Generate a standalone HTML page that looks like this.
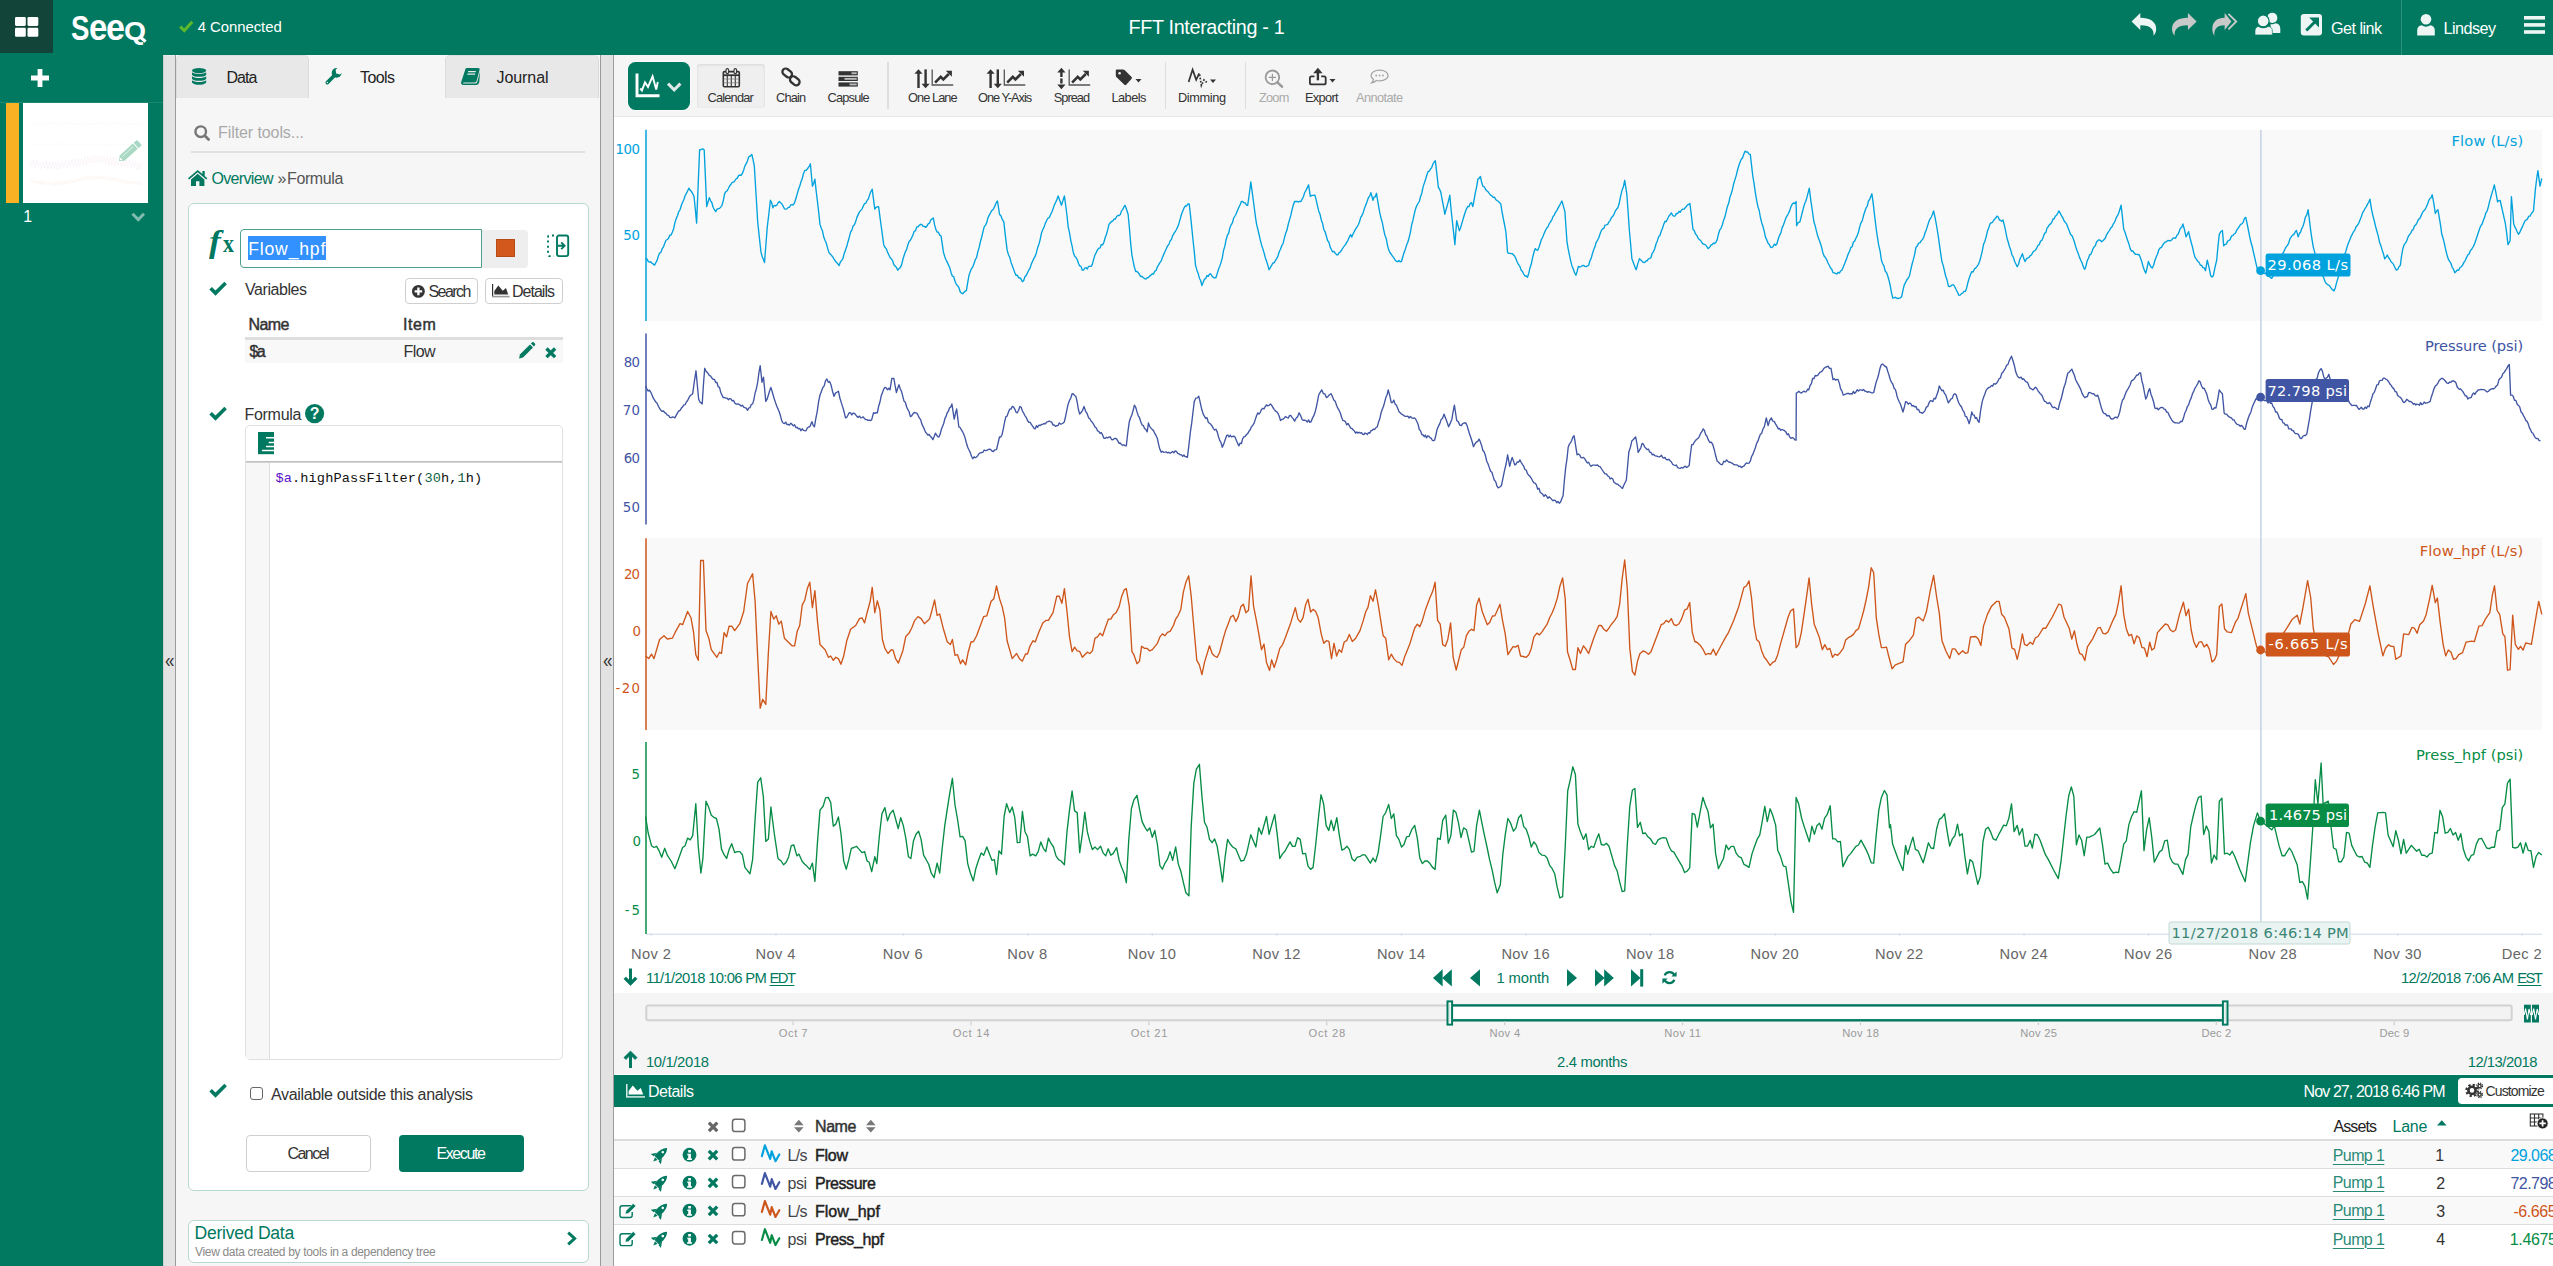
<!DOCTYPE html>
<html lang="en"><head><meta charset="utf-8"><title>FFT Interacting - 1</title>
<style>
html,body{margin:0;padding:0}
body{width:2553px;height:1266px;overflow:hidden;background:#fff;font-family:"Liberation Sans",sans-serif;position:relative}
.a{position:absolute;box-sizing:border-box}
.t{white-space:pre;font-kerning:auto}
svg{overflow:visible}
</style></head><body>
<section class="a" style="left:0;top:0">
<div class="a header" style="left:0px;top:0px;width:2553px;height:54.6px;background:#007960;"></div>
<div class="a sidebar" style="left:0px;top:54.6px;width:163.3px;height:1211.4px;background:#007960;"></div>
<div class="a " style="left:0px;top:0px;width:53px;height:53.3px;background:#13443a;"></div>
<svg class="a" style="left:14.5px;top:16.5px;" width="23.3" height="19.7" viewBox="0 0 23.3 19.7"><g fill="#fff"><rect x="0" y="0" width="10.8" height="8.9" rx="1.3"/><rect x="12.5" y="0" width="10.8" height="8.9" rx="1.3"/><rect x="0" y="10.8" width="10.8" height="8.9" rx="1.3"/><rect x="12.5" y="10.8" width="10.8" height="8.9" rx="1.3"/></g></svg>
<div class="a logo" style="left:0;top:0"><span class="a t" style="left:70.82px;top:6.50px;font:normal bold 35.3px/42px 'Liberation Sans',sans-serif;color:#fff;transform:scaleX(0.7818);transform-origin:0 0;">S</span><span class="a t" style="left:88.69px;top:6.00px;font:normal bold 36.2px/43px 'Liberation Sans',sans-serif;color:#fff;transform:scaleX(0.9111);transform-origin:0 0;">e</span><span class="a t" style="left:106.06px;top:6.00px;font:normal bold 36.2px/43px 'Liberation Sans',sans-serif;color:#fff;transform:scaleX(0.9444);transform-origin:0 0;">e</span><span class="a t" style="left:123.74px;top:15.00px;font:normal bold 26.6px/32px 'Liberation Sans',sans-serif;color:#fff;transform:scaleX(1.0632);transform-origin:0 0;">Q</span></div>
<svg class="a" style="left:136px;top:33px;" width="12" height="11" viewBox="0 0 12 11"><path d="M3.4 3.2 L9.6 8.6" stroke="#fff" stroke-width="3.2"/></svg>
<svg class="a" style="left:179px;top:20px;" width="14.5" height="12.5" viewBox="0 0 14.5 12.5"><path d="M1.2 6.6 L5.3 10.6 L13.3 1.8" stroke="#5cb82a" stroke-width="2.9" fill="none"/></svg>
<span class="a t" style="left:197.70px;top:17.50px;font:normal normal 14.9px/18px 'Liberation Sans',sans-serif;color:#fff;letter-spacing:-0.046px;">4 Connected</span>
<span class="a t" style="left:1128.50px;top:14.90px;font:normal normal 19.8px/24px 'Liberation Sans',sans-serif;color:#fff;letter-spacing:-0.344px;">FFT Interacting - 1</span>
<span class="a t" style="left:2331.00px;top:18.60px;font:normal normal 16.2px/19px 'Liberation Sans',sans-serif;color:#fff;letter-spacing:-0.541px;">Get link</span>
<div class="a " style="left:2401px;top:0px;width:1.2px;height:54.6px;background:#2f917b;"></div>
<span class="a t" style="left:2443.50px;top:18.60px;font:normal normal 16.2px/19px 'Liberation Sans',sans-serif;color:#fff;letter-spacing:-0.533px;">Lindsey</span>
<svg class="a" style="left:2524px;top:16px;" width="21" height="18" viewBox="0 0 21 18"><g fill="#eef6f4"><rect x="0" y="0" width="21" height="3.6"/><rect x="0" y="7.1" width="21" height="3.6"/><rect x="0" y="14.2" width="21" height="3.6"/></g></svg>
<div class="a " style="left:0px;top:101.5px;width:163.3px;height:1.1px;background:#1a8770;"></div>
<svg class="a" style="left:31px;top:68.5px;" width="18" height="18" viewBox="0 0 18 18"><path d="M6.6 0h4.8v6.6h6.6v4.8h-6.6v6.6h-4.8v-6.6h-6.6v-4.8h6.6z" fill="#fff"/></svg>
<div class="a " style="left:6px;top:103.3px;width:13.2px;height:100.2px;background:#fbb124;"></div>
<div class="a thumb" style="left:22.8px;top:103.3px;width:125.4px;height:100.2px;background:#fff;"></div>
<svg class="a" style="left:22.8px;top:103.3px;" width="125.4" height="100.2" viewBox="22.8 103.3 125.4 100.2"><polyline points="30.0,123.1 31.9,125.5 33.7,122.6 35.6,125.0 37.5,122.8 39.3,125.2 41.2,122.7 43.1,125.4 44.9,123.1 46.8,124.8 48.7,122.5 50.5,125.1 52.4,122.6 54.3,124.8 56.1,122.8 58.0,125.4 59.9,123.0 61.7,125.6 63.6,122.5 65.5,124.8 67.3,123.2 69.2,125.2 71.1,122.4 72.9,125.1 74.8,123.0 76.7,125.1 78.5,123.2 80.4,125.0 82.3,122.8 84.1,125.2 86.0,123.0 87.9,125.0 89.7,123.0 91.6,125.2 93.5,123.0 95.3,124.8 97.2,122.5 99.1,125.2 100.9,122.7 102.8,124.9 104.7,122.4 106.5,125.5 108.4,123.1 110.3,125.1 112.1,122.6 114.0,125.4 115.9,122.5 117.7,125.1 119.6,122.5 121.5,125.3 123.3,123.0 125.2,125.3 127.1,122.5 128.9,125.5 130.8,122.8 132.7,125.3 134.5,123.2 136.4,125.0 138.3,122.6 140.1,125.1 142.0,123.1" fill="none" stroke="#4055A3" stroke-width="0.8" opacity="0.04"/><polyline points="30.0,143.4 31.9,146.6 33.7,144.2 35.6,145.9 37.5,143.5 39.3,146.4 41.2,143.7 43.1,146.0 44.9,143.7 46.8,146.3 48.7,143.7 50.5,145.9 52.4,143.9 54.3,146.1 56.1,143.6 58.0,146.6 59.9,143.4 61.7,146.2 63.6,143.8 65.5,146.0 67.3,144.2 69.2,145.8 71.1,143.8 72.9,146.1 74.8,143.9 76.7,146.5 78.5,143.8 80.4,146.2 82.3,144.0 84.1,145.8 86.0,143.9 87.9,145.9 89.7,143.8 91.6,146.6 93.5,143.7 95.3,145.9 97.2,143.5 99.1,146.4 100.9,143.6 102.8,146.5 104.7,143.6 106.5,146.4 108.4,143.9 110.3,146.6 112.1,143.4 114.0,145.9 115.9,143.6 117.7,146.4 119.6,143.8 121.5,146.2 123.3,143.8 125.2,146.5 127.1,143.8 128.9,146.5 130.8,143.9 132.7,146.5 134.5,143.5 136.4,146.2 138.3,143.7 140.1,146.5 142.0,143.6" fill="none" stroke="#068C45" stroke-width="0.8" opacity="0.04"/><polyline points="30.0,160.2 31.6,166.8 33.2,160.6 34.8,167.6 36.4,160.6 38.0,167.0 39.6,162.6 41.2,169.2 42.8,162.5 44.4,168.3 46.0,161.2 47.6,169.1 49.2,161.8 50.8,169.3 52.4,162.3 54.0,168.6 55.6,162.3 57.2,170.1 58.8,162.3 60.4,169.5 62.0,161.6 63.6,167.6 65.2,161.0 66.8,168.2 68.4,161.4 70.0,166.4 71.6,159.6 73.2,166.7 74.8,159.2 76.4,167.0 78.0,158.6 79.6,166.4 81.2,158.7 82.8,165.5 84.4,158.0 86.0,165.3 87.6,156.5 89.2,163.0 90.8,157.8 92.4,163.0 94.0,155.7 95.6,163.3 97.2,156.3 98.8,162.9 100.4,156.7 102.0,163.2 103.6,157.2 105.2,163.9 106.8,157.0 108.4,165.1 110.0,157.2 111.6,165.6 113.2,157.4 114.8,166.3 116.4,158.4 118.0,165.1 119.6,158.6 121.2,167.6 122.8,159.2 124.4,167.3 126.0,160.3 127.6,167.1 129.2,160.6 130.8,168.5 132.4,162.3 134.0,167.8 135.6,161.4 137.2,170.2 138.8,163.4 140.4,170.0 142.0,162.8" fill="none" stroke="#9D248F" stroke-width="0.8" opacity="0.06"/><polyline points="30.0,179.6 31.6,182.5 33.2,180.1 34.8,183.3 36.4,181.1 38.0,184.1 39.6,180.7 41.2,185.1 42.8,181.4 44.4,184.9 46.0,182.0 47.6,185.2 49.2,182.6 50.8,185.2 52.4,182.7 54.0,186.1 55.6,181.9 57.2,185.8 58.8,181.7 60.4,184.9 62.0,181.9 63.6,185.0 65.2,181.0 66.8,184.7 68.4,180.3 70.0,183.3 71.6,180.0 73.2,183.3 74.8,179.4 76.4,182.1 78.0,178.8 79.6,181.3 81.2,177.7 82.8,181.5 84.4,177.5 86.0,180.4 87.6,176.6 89.2,180.3 90.8,176.3 92.4,180.2 94.0,176.4 95.6,179.6 97.2,176.2 98.8,179.6 100.4,176.8 102.0,179.6 103.6,176.2 105.2,179.5 106.8,177.4 108.4,180.6 110.0,177.6 111.6,181.0 113.2,177.9 114.8,181.3 116.4,178.0 118.0,181.8 119.6,179.3 121.2,182.5 122.8,179.7 124.4,183.2 126.0,180.6 127.6,184.3 129.2,181.3 130.8,184.7 132.4,181.1 134.0,184.6 135.6,182.4 137.2,185.1 138.8,181.9 140.4,185.7 142.0,182.6" fill="none" stroke="#CE561B" stroke-width="0.8" opacity="0.07"/><g transform="translate(118.8 161.2) rotate(-42)" fill="#a9d9c5"><path d="M0 0 L4.2 -3.6 L22 -3.6 L22 3.6 L4.2 3.6 Z"/><path d="M23 -3.6 H26.4 Q27.6 -3.6 27.6 -2.4 V2.4 Q27.6 3.6 26.4 3.6 H23 Z"/><path d="M5.5 -1 H20" stroke="#e3f3ec" stroke-width="0.9"/><circle cx="2.6" cy="0" r="1.1" fill="#fff"/></g></svg>
<span class="a t" style="left:23.20px;top:206.90px;font:normal normal 16px/19px 'Liberation Sans',sans-serif;color:#fff;">1</span>
<svg class="a" style="left:131px;top:212px;" width="14.5" height="10" viewBox="0 0 14.5 10"><path d="M1.5 1.8 L7.25 7.6 L13 1.8" stroke="#7fbcaf" stroke-width="3" fill="none"/></svg>
<div class="a " style="left:163.3px;top:54.6px;width:12px;height:1211.4px;background:#e3e3e3;border-left:1px solid #d2cfcf;border-top:1px solid #ebebeb;"></div>
<div class="a " style="left:175.3px;top:54.6px;width:1px;height:1211.4px;background:#9a9a9a;"></div>
<div class="a " style="left:599.9px;top:54.6px;width:1px;height:1211.4px;background:#9a9a9a;"></div>
<div class="a " style="left:600.9px;top:54.6px;width:12px;height:1211.4px;background:#e2e2e2;"></div>
<div class="a " style="left:612.9px;top:54.6px;width:1px;height:1211.4px;background:#9c9c9c;"></div>
<span class="a t" style="left:165.10px;top:647.30px;font:normal normal 21px/25px 'Liberation Sans',sans-serif;color:#333;transform:scaleX(0.8091);transform-origin:0 0;">«</span>
<span class="a t" style="left:602.60px;top:647.30px;font:normal normal 21px/25px 'Liberation Sans',sans-serif;color:#333;transform:scaleX(0.8091);transform-origin:0 0;">«</span>
</section>
<svg class="a" style="left:0;top:0" width="2553" height="55" viewBox="0 0 2553 55">
<g fill="#edf6f4"><path transform="translate(2131.6 13.1)" d="M0 8.3 L8.7 0 L8.7 4.6 C18 4.6 24.6 8.4 24.6 15.8 C24.6 18.6 23.2 21.2 21.9 22.6 C22.6 17 19.8 12.1 8.7 12.1 L8.7 16.8 Z"/></g>
<g fill="#c9c9c9"><path transform="translate(2196.6 13.1) scale(-1 1)" d="M0 8.3 L8.7 0 L8.7 4.6 C18 4.6 24.6 8.4 24.6 15.8 C24.6 18.6 23.2 21.2 21.9 22.6 C22.6 17 19.8 12.1 8.7 12.1 L8.7 16.8 Z"/></g>
<g fill="#c9c9c9"><path transform="translate(2231.4 13.1) scale(-0.776 1)" d="M0 8.3 L8.7 0 L8.7 4.6 C18 4.6 24.6 8.4 24.6 15.8 C24.6 18.6 23.2 21.2 21.9 22.6 C22.6 17 19.8 12.1 8.7 12.1 L8.7 16.8 Z"/><path d="M2228.4 13.9 L2236.2 21.5 L2228.4 29.3" stroke="#c9c9c9" stroke-width="1.9" fill="none"/></g>
<g fill="#edf6f4"><circle cx="2272.3" cy="17.9" r="5.1"/><path d="M2271 33 L2280.3 33 L2280.3 28.5 C2280.3 25.5 2278.5 23.6 2275.5 23.3 C2274 24.3 2272.5 24.6 2270.5 24.2 Z"/><circle cx="2263.2" cy="20.9" r="5.9" stroke="#007960" stroke-width="1.2"/><path d="M2255 34.9 L2272.4 34.9 L2272.4 31 C2272.4 28.2 2270.8 26.6 2268.3 26.4 C2265 28.4 2261.5 28.4 2258.6 26.4 C2256.5 26.6 2255 28.2 2255 31 Z" stroke="#007960" stroke-width="0.6"/></g>
<rect x="2300.8" y="14.1" width="21.2" height="21.4" rx="3.2" fill="#edf6f4"/><path d="M2306.3 30.4 L2316.2 20.4" stroke="#007960" stroke-width="2.9"/><path d="M2309.2 17.6 L2319 17.6 L2319 27.4 Z" fill="#007960"/>
<g fill="#edf6f4"><circle cx="2426" cy="19.3" r="5.3"/><path d="M2417.2 35.4 L2434.8 35.4 L2434.8 30.5 C2434.8 27.3 2433 25.6 2430.3 25.3 C2427.5 27.2 2424.5 27.2 2421.7 25.3 C2419 25.6 2417.2 27.3 2417.2 30.5 Z"/></g>
</svg>
<section class="a" style="left:0;top:0">
<div class="a panel" style="left:176.3px;top:54.6px;width:423.6px;height:1211.4px;background:#f6f6f6;"></div>
<div class="a " style="left:176.3px;top:55.3px;width:132.3px;height:42.9px;background:#e8e8e8;border:1px solid #dcdcdc;border-bottom:none;border-radius:5px 5px 0 0;"></div>
<div class="a " style="left:445px;top:55.3px;width:153.6px;height:42.9px;background:#e8e8e8;border:1px solid #dcdcdc;border-bottom:none;border-radius:5px 5px 0 0;"></div>
<span class="a t" style="left:226.50px;top:67.90px;font:normal normal 16px/19px 'Liberation Sans',sans-serif;color:#222;letter-spacing:-0.966px;">Data</span>
<span class="a t" style="left:360.00px;top:67.90px;font:normal normal 16px/19px 'Liberation Sans',sans-serif;color:#222;letter-spacing:-0.588px;">Tools</span>
<span class="a t" style="left:496.50px;top:67.90px;font:normal normal 16px/19px 'Liberation Sans',sans-serif;color:#222;letter-spacing:-0.070px;">Journal</span>
<span class="a t" style="left:218.00px;top:123.40px;font:normal normal 16px/19px 'Liberation Sans',sans-serif;color:#a9a9a9;letter-spacing:-0.085px;">Filter tools...</span>
<div class="a " style="left:191px;top:151.3px;width:394px;height:1.3px;background:#e2e2e2;"></div>
<span class="a t" style="left:211.50px;top:168.70px;font:normal normal 16px/19px 'Liberation Sans',sans-serif;color:#007960;letter-spacing:-0.661px;">Overview</span>
<span class="a t" style="left:277.60px;top:168.70px;font:normal normal 16px/19px 'Liberation Sans',sans-serif;color:#555;">»</span>
<span class="a t" style="left:287.00px;top:168.70px;font:normal normal 16px/19px 'Liberation Sans',sans-serif;color:#555;letter-spacing:-0.380px;">Formula</span>
<div class="a card" style="left:188.1px;top:203.4px;width:400.7px;height:987.4px;background:#fff;border:1.3px solid #b5d8d0;border-radius:6px;"></div>
<div class="a" style="left:0;top:0"><span class="a t" style="left:208.50px;top:222.30px;font:italic bold 32px/38px 'Liberation Serif',serif;color:#007960;transform:scaleX(1.1071);transform-origin:0 0;">f</span><span class="a t" style="left:223.20px;top:228.30px;font:normal bold 26px/31px 'Liberation Serif',serif;color:#007960;transform:scaleX(0.8462);transform-origin:0 0;">x</span></div>
<div class="a " style="left:240px;top:229.2px;width:241.5px;height:38.4px;background:#fff;border:1.4px solid #4e9f8c;border-radius:4px 0 0 4px;"></div>
<div class="a " style="left:481.5px;top:229.5px;width:46.5px;height:38px;background:#eeeeee;border-radius:0 4px 4px 0;"></div>
<div class="a " style="left:248px;top:235.6px;width:78.3px;height:24.4px;background:#3390ff;"></div>
<span class="a t" style="left:248.20px;top:239.10px;font:normal normal 17.6px/21px 'Liberation Sans',sans-serif;color:#fff;letter-spacing:0.828px;">Flow_hpf</span>
<div class="a " style="left:496px;top:238.6px;width:19px;height:18.7px;background:#d2581b;border:1px solid #b84c16;"></div>
<span class="a t" style="left:245.00px;top:280.10px;font:normal normal 16px/19px 'Liberation Sans',sans-serif;color:#333;letter-spacing:-0.439px;">Variables</span>
<div class="a " style="left:405px;top:277.5px;width:72.5px;height:26.5px;background:#fff;border:1.2px solid #cfcfcf;border-radius:4px;"></div>
<div class="a " style="left:485px;top:277.5px;width:78px;height:26.5px;background:#fff;border:1.2px solid #cfcfcf;border-radius:4px;"></div>
<span class="a t" style="left:428.50px;top:281.90px;font:normal normal 16px/19px 'Liberation Sans',sans-serif;color:#333;letter-spacing:-1.559px;">Search</span>
<span class="a t" style="left:512.00px;top:281.90px;font:normal normal 16px/19px 'Liberation Sans',sans-serif;color:#333;letter-spacing:-0.984px;">Details</span>
<span class="a t" style="left:248.50px;top:315.00px;font:normal normal 16px/19px 'Liberation Sans',sans-serif;color:#333;letter-spacing:-0.594px;-webkit-text-stroke:0.45px #333;">Name</span>
<span class="a t" style="left:403.00px;top:315.00px;font:normal normal 16px/19px 'Liberation Sans',sans-serif;color:#333;letter-spacing:0.570px;-webkit-text-stroke:0.45px #333;">Item</span>
<div class="a " style="left:245px;top:337.3px;width:317.5px;height:2.3px;background:#dddddd;"></div>
<div class="a " style="left:245px;top:339.6px;width:317.5px;height:23.4px;background:#f8f8f8;"></div>
<span class="a t" style="left:249.50px;top:341.50px;font:normal normal 16px/19px 'Liberation Sans',sans-serif;color:#333;letter-spacing:-1.600px;-webkit-text-stroke:0.45px #333;">$a</span>
<span class="a t" style="left:403.50px;top:341.50px;font:normal normal 16px/19px 'Liberation Sans',sans-serif;color:#333;letter-spacing:-0.576px;">Flow</span>
<span class="a t" style="left:244.50px;top:404.80px;font:normal normal 16px/19px 'Liberation Sans',sans-serif;color:#333;letter-spacing:-0.297px;">Formula</span>
<div class="a " style="left:245px;top:425.4px;width:317.6px;height:634.6px;background:#fff;border:1.2px solid #e0e0e0;border-radius:5px;"></div>
<div class="a " style="left:245.6px;top:461px;width:316.4px;height:2.2px;background:linear-gradient(#b5b5b5,#dedede);"></div>
<div class="a " style="left:246.2px;top:463.2px;width:24.2px;height:595.8px;background:#f7f7f7;border-right:1.2px solid #dddddd;"></div>
<span class="a t" style="left:275.50px;top:471.40px;font:normal normal 13.62px/16px 'Liberation Mono',monospace;color:#111;letter-spacing:0.104px;"><span style="color:#5a12c8">$a</span>.highPassFilter(<span style="color:#116644">30</span>h,<span style="color:#116644">1</span>h)</span>
<div class="a " style="left:250px;top:1086.5px;width:13px;height:13px;background:#fff;border:1.5px solid #666;border-radius:3px;"></div>
<span class="a t" style="left:271.00px;top:1085.10px;font:normal normal 16px/19px 'Liberation Sans',sans-serif;color:#333;letter-spacing:-0.342px;">Available outside this analysis</span>
<div class="a " style="left:246px;top:1134.5px;width:125px;height:37px;background:#fff;border:1.3px solid #cfcfcf;border-radius:4px;"></div>
<span class="a t" style="left:287.50px;top:1144.10px;font:normal normal 16px/19px 'Liberation Sans',sans-serif;color:#333;letter-spacing:-1.550px;">Cancel</span>
<div class="a " style="left:399px;top:1134.5px;width:125px;height:37px;background:#007960;border-radius:4px;"></div>
<span class="a t" style="left:436.50px;top:1144.10px;font:normal normal 16px/19px 'Liberation Sans',sans-serif;color:#fff;letter-spacing:-1.402px;">Execute</span>
<div class="a " style="left:188.1px;top:1219.5px;width:400.7px;height:43.8px;background:#fff;border:1.3px solid #b5d8d0;border-radius:6px;"></div>
<span class="a t" style="left:194.50px;top:1223.30px;font:normal normal 17.6px/21px 'Liberation Sans',sans-serif;color:#007960;letter-spacing:-0.263px;">Derived Data</span>
<span class="a t" style="left:195.00px;top:1245.20px;font:normal normal 12px/14px 'Liberation Sans',sans-serif;color:#8a8a8a;letter-spacing:-0.332px;">View data created by tools in a dependency tree</span>
</section>
<svg class="a" style="left:192.4px;top:68.2px;" width="14.2" height="16.8" viewBox="0 0 14.2 16.8"><g fill="#007960"><ellipse cx="7.1" cy="2.6" rx="7.1" ry="2.6"/><path d="M0 4.3 C2 6.6 12.2 6.6 14.2 4.3 L14.2 6.9 C12.2 9.4 2 9.4 0 6.9 Z"/><path d="M0 8.3 C2 10.7 12.2 10.7 14.2 8.3 L14.2 10.9 C12.2 13.4 2 13.4 0 10.9 Z"/><path d="M0 12.3 C2 14.7 12.2 14.7 14.2 12.3 L14.2 14.4 C12.2 17.6 2 17.6 0 14.4 Z"/></g></svg>
<svg class="a" style="left:324.5px;top:68.2px;" width="16.5" height="16.8" viewBox="0 0 16.5 16.8"><g fill="#007960"><path d="M2.3 14.6 L9.6 7.3" stroke="#007960" stroke-width="3.7" stroke-linecap="round"/><circle cx="11.6" cy="4.9" r="4.9"/><path d="M11.2 5.4 L10.6 1.8 L13 -0.6 L17.6 -0.6 L17.6 4.2 L15 6.4 Z" fill="#f6f6f6"/><circle cx="2.4" cy="14.5" r="0.75" fill="#f6f6f6"/></g></svg>
<svg class="a" style="left:461.2px;top:68px;" width="18.8" height="17" viewBox="0 0 18.8 17"><g fill="#007960"><path d="M4.6 0.6 C4.8 0.2 5.2 0 5.7 0 L17.2 0 C18.4 0 18.9 0.8 18.6 1.8 L15.6 13 C15.3 14 14.6 14.4 13.8 14.4 L2.6 14.4 C1.9 14.4 1.8 15.3 2.6 15.4 L14.5 15.4 C15.5 15.4 16 15 16.3 14 L19 3.5 L18.3 14 C18 16 16.5 17 15 17 L2.4 17 C0.6 17 -0.3 15.6 0.2 14 Z"/><path d="M7.2 3.1 L15 3.1 L14.7 4.3 L6.9 4.3 Z M6.5 5.6 L14.3 5.6 L14 6.8 L6.2 6.8 Z" fill="#e8e8e8"/></g></svg>
<svg class="a" style="left:193.5px;top:124.6px;" width="16" height="15.8" viewBox="0 0 16 15.8"><circle cx="6.7" cy="6.7" r="5.3" fill="none" stroke="#777" stroke-width="2.4"/><path d="M10.6 10.4 L14.6 14.4" stroke="#777" stroke-width="2.8" stroke-linecap="round"/></svg>
<svg class="a" style="left:187.8px;top:169.5px;" width="19.4" height="16.1" viewBox="0 0 19.4 16.1"><g fill="#007960"><path d="M9.7 0 L0 8.2 L1.1 9.5 L9.7 2.3 L18.3 9.5 L19.4 8.2 L16.7 5.9 L16.7 1.1 L14.4 1.1 L14.4 4 Z"/><path d="M9.7 3.8 L3 9.4 L3 16.1 L8 16.1 L8 11.3 L11.4 11.3 L11.4 16.1 L16.4 16.1 L16.4 9.4 Z"/></g></svg>
<svg class="a" style="left:208.5px;top:281px;" width="18" height="14" viewBox="0 0 18 14"><path d="M1.6 7.3 L6.5 12.1 L16.6 1.9" stroke="#007960" stroke-width="3.6" fill="none"/></svg>
<svg class="a" style="left:208.5px;top:406px;" width="18" height="14" viewBox="0 0 18 14"><path d="M1.6 7.3 L6.5 12.1 L16.6 1.9" stroke="#007960" stroke-width="3.6" fill="none"/></svg>
<svg class="a" style="left:208.5px;top:1083px;" width="18" height="14" viewBox="0 0 18 14"><path d="M1.6 7.3 L6.5 12.1 L16.6 1.9" stroke="#007960" stroke-width="3.6" fill="none"/></svg>
<svg class="a" style="left:546px;top:234px;" width="24" height="24" viewBox="0 0 24 24"><rect x="11" y="1.5" width="11.2" height="20.6" rx="2" fill="none" stroke="#007960" stroke-width="1.9"/><path d="M11.5 11.8 L18 11.8 M15.2 8.4 L18.6 11.8 L15.2 15.2" stroke="#007960" stroke-width="1.9" fill="none"/><path d="M8 1.5 L3.5 1.5 Q2 1.5 2 3 L2 20.6 Q2 22.1 3.5 22.1 L8 22.1" fill="none" stroke="#007960" stroke-width="1.9" stroke-dasharray="2 3.1"/></svg>
<svg class="a" style="left:412.3px;top:285px;" width="12.8" height="12.8" viewBox="0 0 12.8 12.8"><circle cx="6.4" cy="6.4" r="6.4" fill="#333"/><path d="M6.4 2.6 V10.2 M2.6 6.4 H10.2" stroke="#fff" stroke-width="2.3"/></svg>
<svg class="a" style="left:492px;top:284.4px;" width="17.6" height="13.4" viewBox="0 0 17.6 13.4"><path d="M0.6 0 V13" stroke="#333" stroke-width="1.2"/><path d="M0 12.6 H17.6" stroke="#999" stroke-width="1.6"/><path d="M2.3 10.6 L2.3 7 L6.3 1.4 L10.8 6.7 L14 3.9 L16.2 10.6 Z" fill="#333"/></svg>
<svg class="a" style="left:519px;top:342.4px;" width="16" height="16.6" viewBox="0 0 16 16.6"><g fill="#007960"><path d="M0 16.6 L1.1 12.3 L11 2.4 L14 5.4 L4.1 15.4 Z"/><path d="M11.9 1.5 L13 0.4 C13.5 -0.1 14.3 -0.1 14.8 0.4 L15.9 1.5 C16.4 2 16.4 2.8 15.9 3.3 L14.9 4.4 Z"/></g></svg>
<svg class="a" style="left:545.3px;top:347px;" width="11.6" height="11.6" viewBox="0 0 11.6 11.6"><path d="M1.5 1.5 L10.1 10.1 M10.1 1.5 L1.5 10.1" stroke="#007960" stroke-width="3.4"/></svg>
<svg class="a" style="left:305px;top:404px;" width="19.2" height="19.2" viewBox="0 0 19.2 19.2"><circle cx="9.6" cy="9.6" r="9.6" fill="#007960"/><text x="9.6" y="15.2" text-anchor="middle" font-family="Liberation Sans,sans-serif" font-weight="bold" font-size="16" fill="#fff">?</text></svg>
<svg class="a" style="left:258px;top:432px;" width="16" height="22.2" viewBox="0 0 16 22.2"><rect x="0" y="0" width="16" height="22.2" fill="#007960"/><g stroke="#fff" stroke-width="1.5"><path d="M8 5.8 H16 M10.7 10.4 H16 M8 14.5 H16 M4 18.5 H16"/></g></svg>
<svg class="a" style="left:565.5px;top:1230.5px;" width="11.5" height="15" viewBox="0 0 11.5 15"><path d="M2.2 1.6 L8.6 7.5 L2.2 13.4" stroke="#007960" stroke-width="3" fill="none"/></svg>
<section class="a" style="left:0;top:0">
<div class="a toolbar" style="left:613.9px;top:54.6px;width:1939.1px;height:62.7px;background:#f5f5f5;border-bottom:1.1px solid #e6e6e6;"></div>
<div class="a " style="left:627.7px;top:62.2px;width:62.3px;height:47.6px;background:#007960;border-radius:7.5px;box-shadow:0 0 0 0.8px #fbfbfb;"></div>
<div class="a " style="left:697px;top:64px;width:68px;height:44px;background:#efefef;border-radius:3px;box-shadow:inset 0 1px 3px rgba(0,0,0,.10);"></div>
<span class="a t" style="left:707.50px;top:89.60px;font:normal normal 12.8px/15px 'Liberation Sans',sans-serif;color:#333;letter-spacing:-0.810px;">Calendar</span>
<span class="a t" style="left:776.00px;top:89.60px;font:normal normal 12.8px/15px 'Liberation Sans',sans-serif;color:#333;letter-spacing:-0.830px;">Chain</span>
<span class="a t" style="left:827.50px;top:89.60px;font:normal normal 12.8px/15px 'Liberation Sans',sans-serif;color:#333;letter-spacing:-0.806px;">Capsule</span>
<span class="a t" style="left:908.00px;top:89.60px;font:normal normal 12.8px/15px 'Liberation Sans',sans-serif;color:#333;letter-spacing:-0.942px;">One Lane</span>
<span class="a t" style="left:978.00px;top:89.60px;font:normal normal 12.8px/15px 'Liberation Sans',sans-serif;color:#333;letter-spacing:-1.016px;">One Y-Axis</span>
<span class="a t" style="left:1053.70px;top:89.60px;font:normal normal 12.8px/15px 'Liberation Sans',sans-serif;color:#333;letter-spacing:-0.970px;">Spread</span>
<span class="a t" style="left:1111.50px;top:89.60px;font:normal normal 12.8px/15px 'Liberation Sans',sans-serif;color:#333;letter-spacing:-0.562px;">Labels</span>
<span class="a t" style="left:1178.00px;top:90.40px;font:normal normal 12.8px/15px 'Liberation Sans',sans-serif;color:#333;letter-spacing:-0.394px;">Dimming</span>
<span class="a t" style="left:1259.00px;top:89.60px;font:normal normal 12.8px/15px 'Liberation Sans',sans-serif;color:#aaa;letter-spacing:-0.784px;">Zoom</span>
<span class="a t" style="left:1305.00px;top:89.60px;font:normal normal 12.8px/15px 'Liberation Sans',sans-serif;color:#333;letter-spacing:-0.686px;">Export</span>
<span class="a t" style="left:1356.00px;top:89.60px;font:normal normal 12.8px/15px 'Liberation Sans',sans-serif;color:#aaa;letter-spacing:-0.588px;">Annotate</span>
<div class="a " style="left:887.4px;top:62px;width:1.2px;height:47px;background:#dedede;"></div>
<div class="a " style="left:1164.7px;top:62px;width:1.2px;height:47px;background:#dedede;"></div>
<div class="a " style="left:1244.8px;top:62px;width:1.2px;height:47px;background:#dedede;"></div>
</section>
<svg class="a" style="left:0;top:0" width="2553" height="117" viewBox="0 0 2553 117">
<path d="M637 73.5 V95.7 H659.5" stroke="#fff" stroke-width="2.9" fill="none"/><path d="M640.3 88.4 L641.9 90.6 L645 82.4 L648 87 L652.6 76.3 L656.2 89.6 L657.8 82" stroke="#fff" stroke-width="1.9" fill="none" stroke-linejoin="miter"/><path d="M668 83.6 L674.2 89.8 L680.4 83.6" stroke="#dfe9e6" stroke-width="3" fill="none"/>
<g stroke="#333" fill="none"><rect x="723.3" y="71.6" width="16" height="15.2" rx="1.2" stroke-width="1.6"/><path d="M723.3 75.2 H739.3" stroke-width="1.8"/><path d="M727.3 75.5 V86.5 M731.3 75.5 V86.5 M735.3 75.5 V86.5" stroke-width="1.1"/><path d="M723.5 79 H739 M723.5 82.8 H739" stroke-width="0.7" stroke="#777"/><rect x="726" y="68.6" width="2.6" height="5" rx="1.3" stroke-width="1.1" fill="#efefef"/><rect x="734" y="68.6" width="2.6" height="5" rx="1.3" stroke-width="1.1" fill="#efefef"/></g>
<g stroke="#333" stroke-width="2.3" fill="none"><rect x="-5.2" y="-3.3" width="10.4" height="6.6" rx="3.3" transform="translate(787.2 73) rotate(38)"/><rect x="-5.2" y="-3.3" width="10.4" height="6.6" rx="3.3" transform="translate(794.8 80.8) rotate(38)"/></g>
<g><rect x="838.5" y="71.2" width="19.3" height="4.2" fill="#333"/><rect x="851.5" y="72.3" width="5.2" height="1.9" fill="#bbb"/><rect x="838.5" y="76.8" width="19.3" height="4.2" fill="#333"/><rect x="844.5" y="77.9" width="12.2" height="1.9" fill="#bbb"/><rect x="838.5" y="82.4" width="19.3" height="4.2" fill="#333"/><rect x="849.5" y="83.5" width="7.2" height="1.9" fill="#bbb"/></g>
<path d="M918.5 88 V72.2" stroke="#333" stroke-width="2.4"/><path d="M914.4 73.8 L918.5 69.2 L922.6 73.8 Z" fill="#333"/><path d="M925.6 69.4 V85.3" stroke="#333" stroke-width="2.4"/><path d="M921.5 83.7 L925.6 88.3 L929.7 83.7 Z" fill="#333"/><path d="M932.2 69.5 V85 H953.2" stroke="#555" stroke-width="1.3" fill="none"/><path d="M935.1 82.6 L940.7 76.9 L943.3000000000001 79.5 L948.8000000000001 74" stroke="#333" stroke-width="2.6" fill="none"/><path d="M945.8000000000001 70.7 H951.9000000000001 V76.8 Z" fill="#333"/>
<path d="M990.6 88 V72.2" stroke="#333" stroke-width="2.4"/><path d="M986.5 73.8 L990.6 69.2 L994.7 73.8 Z" fill="#333"/><path d="M997.8 69.4 V85.3" stroke="#333" stroke-width="2.4"/><path d="M993.6999999999999 83.7 L997.8 88.3 L1001.9 83.7 Z" fill="#333"/><path d="M1004.3 69.5 V85 H1025.3" stroke="#555" stroke-width="1.3" fill="none"/><path d="M1007.1999999999999 82.6 L1012.8 76.9 L1015.4 79.5 L1020.9 74" stroke="#333" stroke-width="2.6" fill="none"/><path d="M1017.9 70.7 H1024.0 V76.8 Z" fill="#333"/>
<path d="M1061.4 72 V85" stroke="#333" stroke-width="2.4" stroke-dasharray="5 1.6"/><path d="M1057.3 72.6 L1061.4 67.7 L1065.5 72.6 Z M1057.3 84.4 L1061.4 89.3 L1065.5 84.4 Z" fill="#333"/><path d="M1069.2 69.5 V85 H1090.2" stroke="#555" stroke-width="1.3" fill="none"/><path d="M1072.1000000000001 82.6 L1077.7 76.9 L1080.3 79.5 L1085.8 74" stroke="#333" stroke-width="2.6" fill="none"/><path d="M1082.8 70.7 H1088.9 V76.8 Z" fill="#333"/>
<path d="M1115.8 70.6 Q1115.8 69.4 1117 69.4 L1123 69.4 Q1124 69.4 1124.8 70.2 L1131.6 77 Q1132.4 77.9 1131.6 78.8 L1126.2 84.8 Q1125.3 85.7 1124.4 84.8 L1116.6 77.2 Q1115.8 76.4 1115.8 75.4 Z" fill="#333"/><circle cx="1119.6" cy="73.2" r="1.25" fill="#f5f5f5"/>
<path d="M1135.5 79 h6 l-3 3.5 Z" fill="#333"/><path d="M1210 79.6 h6 l-3 3.5 Z" fill="#333"/><path d="M1329.5 79 h6 l-3 3.5 Z" fill="#333"/>
<path d="M1188.6 82 L1192.6 69.6 L1196.2 79.8 L1199.2 73.4" stroke="#333" stroke-width="1.7" fill="none"/><path d="M1199.6 74.5 L1201.4 85.4 L1204 79.9 L1207 82.6" stroke="#333" stroke-width="1.7" fill="none" stroke-dasharray="1.7 1.5"/>
<circle cx="1272.4" cy="77.3" r="6.8" stroke="#999" stroke-width="1.8" fill="none"/><path d="M1268.8 77.3 H1276 M1272.4 73.7 V80.9" stroke="#999" stroke-width="1.2"/><path d="M1277.4 82.4 L1282 86.6" stroke="#999" stroke-width="2.6" stroke-linecap="round"/>
<path d="M1314.5 76.3 H1311.6 Q1309.9 76.3 1309.9 78 V82.7 Q1309.9 84.4 1311.6 84.4 H1324 Q1325.7 84.4 1325.7 82.7 V78 Q1325.7 76.3 1324 76.3 H1321.2" stroke="#333" stroke-width="1.8" fill="none"/><path d="M1317.9 80.3 V71.5" stroke="#333" stroke-width="2.4"/><path d="M1313.2 73.2 L1317.9 67.8 L1322.6 73.2 Z" fill="#333"/>
<path d="M1379.6 70.1 C1384.6 70.1 1388.1 72.5 1388.1 75.5 C1388.1 78.5 1384.6 80.9 1379.6 80.9 C1378.4 80.9 1377.3 80.8 1376.3 80.5 C1375 81.8 1373.3 82.6 1371.6 82.9 C1372.6 81.9 1373.2 80.7 1373.4 79.4 C1372 78.4 1371.1 77 1371.1 75.5 C1371.1 72.5 1374.6 70.1 1379.6 70.1 Z" stroke="#a5a5a5" stroke-width="1.3" fill="none"/><g fill="#a5a5a5"><circle cx="1376.2" cy="75.5" r="0.9"/><circle cx="1379.6" cy="75.5" r="0.9"/><circle cx="1383" cy="75.5" r="0.9"/></g>
</svg>
<section class="a" style="left:0;top:0">
<div class="a " style="left:613.9px;top:117.7px;width:1939.1px;height:875.6px;background:#fff;"></div>
<div class="a " style="left:646px;top:129.8px;width:1896px;height:191.2px;background:#f9f9f9;"></div>
<div class="a " style="left:646px;top:538.2px;width:1896px;height:191.7px;background:#f9f9f9;"></div>
<svg class="a" style="left:0;top:0" width="2553" height="1000" viewBox="0 0 2553 1000">
<path d="M646 934.2 H2542" stroke="#dfe4f3" stroke-width="1.6"/>
<path d="M651.3 933.5 v2 M775.9 933.5 v2 M903.2 933.5 v2 M1027.7 933.5 v2 M1152.3 933.5 v2 M1276.8 933.5 v2 M1401.4 933.5 v2 M1525.9 933.5 v2 M1650.4 933.5 v2 M1775.0 933.5 v2 M1899.5 933.5 v2 M2024.1 933.5 v2 M2148.6 933.5 v2 M2273.1 933.5 v2 M2397.7 933.5 v2 M2522.2 933.5 v2" stroke="#ccd6eb" stroke-width="1.3"/>
<path d="M646 129.8 V321" stroke="#00A2DD" stroke-width="1.5"/>
<polyline points="645.6,258.7 646.9,258.7 648.2,261.4 649.5,262.1 650.7,261.8 652.0,263.3 653.3,264.1 654.6,265.1 655.8,262.8 657.1,260.4 658.4,256.0 659.6,253.1 660.9,252.4 662.2,248.7 663.5,246.8 664.7,243.5 666.0,240.3 667.3,239.5 668.6,238.3 669.8,235.2 671.1,235.0 672.4,232.0 673.6,228.9 674.9,222.7 676.2,218.6 677.5,215.8 678.7,211.6 680.0,209.8 681.3,205.5 682.6,202.2 683.8,199.7 685.1,195.8 686.4,193.4 687.6,191.0 688.9,188.2 690.2,190.3 691.5,191.6 692.7,193.7 694.0,196.4 695.3,209.0 696.6,223.1 698.1,186.5 699.6,150.0 701.1,149.5 702.7,148.8 704.2,150.0 705.5,179.1 706.7,206.6 708.0,202.2 709.3,197.6 710.6,200.8 711.8,202.5 713.1,207.3 714.4,209.7 715.7,211.6 716.9,209.4 718.2,208.7 719.5,208.4 720.7,207.1 722.0,205.3 723.3,200.6 724.6,193.8 725.8,191.7 727.1,190.8 728.4,188.5 729.7,185.7 730.9,184.5 732.2,182.4 733.5,182.2 734.7,181.0 736.0,179.0 737.3,178.1 738.6,175.6 739.8,175.0 741.1,175.3 742.4,173.5 743.7,169.9 744.9,166.0 746.2,163.7 747.5,160.7 748.7,156.9 750.3,156.1 751.8,154.4 753.1,159.8 754.3,165.8 756.0,193.7 757.7,221.8 759.3,237.1 761.0,252.4 762.2,256.5 763.3,259.2 764.5,262.6 765.9,244.5 767.3,226.9 768.9,213.5 770.4,200.2 771.7,202.8 772.9,207.8 774.2,205.4 775.5,205.8 776.8,205.2 778.0,203.0 779.3,201.5 780.6,202.7 781.8,203.7 783.1,206.1 784.4,208.8 785.7,209.1 786.9,208.9 788.2,207.4 789.5,207.3 790.8,204.8 792.0,204.6 793.3,204.8 794.6,202.7 795.8,198.8 797.1,194.4 798.4,189.8 799.7,186.2 800.9,182.1 802.2,178.8 803.5,173.5 804.9,170.3 806.2,170.3 807.6,168.5 809.0,166.7 810.4,163.8 812.4,186.2 813.7,183.2 814.9,179.1 816.2,191.2 817.5,201.8 818.8,213.2 820.0,224.4 821.3,228.2 822.6,231.3 823.8,237.3 825.1,240.6 826.4,243.6 827.7,248.4 828.9,252.4 830.2,254.0 831.5,255.3 832.8,257.0 834.0,259.1 835.3,261.0 836.6,262.6 837.9,263.9 839.1,265.6 840.4,262.1 841.7,260.4 842.9,258.7 844.2,253.5 845.5,250.0 846.8,246.3 848.0,241.7 849.3,237.2 850.6,232.0 851.9,230.1 853.1,226.0 854.4,224.8 855.7,221.6 856.9,217.4 858.2,214.6 859.5,211.9 860.8,210.4 862.0,209.1 863.3,205.9 864.6,203.7 865.9,203.1 867.1,200.4 868.4,198.9 869.7,194.6 870.9,191.6 872.2,189.2 873.5,199.2 874.8,209.1 876.0,207.4 877.3,206.8 878.6,206.6 879.9,216.6 881.1,225.5 882.4,234.8 883.7,244.7 884.9,247.2 886.2,248.6 887.5,252.1 888.8,254.7 890.0,257.5 891.3,258.8 892.6,260.7 893.9,264.8 895.1,266.0 896.4,267.4 897.7,270.2 899.0,268.8 900.2,267.6 901.5,265.1 902.8,259.8 904.0,255.8 905.3,252.0 906.6,249.4 907.9,244.7 909.1,241.4 910.4,240.2 911.7,237.6 913.0,234.7 914.2,231.3 915.5,230.7 916.8,226.9 918.0,226.8 919.3,225.3 920.6,224.4 921.9,224.5 923.1,226.3 924.4,226.4 925.7,227.4 927.0,226.1 928.2,223.8 929.5,223.1 930.8,220.1 932.0,219.1 933.3,218.0 934.6,224.9 935.9,229.5 937.1,232.0 938.4,232.2 939.7,235.1 941.0,235.8 942.2,243.6 943.5,252.4 944.8,256.9 946.0,259.8 947.3,262.4 948.6,265.3 949.9,268.1 951.1,272.7 952.4,276.2 953.7,276.7 955.0,281.2 956.2,284.1 957.5,285.7 958.8,287.2 960.1,291.5 961.3,293.1 962.6,293.7 963.9,292.4 965.1,291.2 966.4,290.6 967.7,282.6 969.0,275.3 970.2,271.9 971.5,268.6 972.8,266.8 974.1,263.2 975.3,259.7 976.6,257.5 977.9,251.4 979.1,247.7 980.4,241.7 981.7,237.1 983.0,231.6 984.2,226.9 985.5,225.1 986.8,222.4 988.1,217.4 989.3,215.1 990.6,212.7 991.9,210.4 993.3,209.2 994.7,206.4 996.1,202.9 997.5,201.0 999.5,214.2 1001.0,216.0 1002.4,219.7 1003.8,221.8 1005.5,236.7 1007.1,249.8 1008.4,254.7 1009.7,257.1 1011.0,262.2 1012.2,265.6 1013.5,268.9 1014.8,272.7 1016.1,275.4 1017.3,275.1 1018.6,277.8 1019.9,277.7 1021.2,279.3 1022.4,281.7 1023.7,280.5 1025.0,276.5 1026.2,275.6 1027.5,272.7 1028.8,270.2 1030.1,268.1 1031.3,264.1 1032.6,261.3 1033.9,258.4 1035.2,256.2 1036.4,252.7 1037.7,247.6 1039.0,244.0 1040.2,239.3 1041.5,233.0 1042.8,229.5 1044.1,227.1 1045.3,223.4 1046.6,220.7 1047.9,218.2 1049.2,217.7 1050.4,214.9 1051.7,212.5 1053.0,209.1 1054.2,205.4 1055.5,202.8 1056.8,199.9 1058.1,195.9 1059.7,200.3 1061.4,205.3 1062.9,200.8 1064.4,195.9 1065.7,205.5 1067.0,215.5 1068.2,226.9 1069.5,232.7 1070.8,240.6 1072.1,246.2 1073.3,252.4 1074.6,256.0 1075.9,257.4 1077.2,259.5 1078.4,263.3 1079.7,265.9 1081.0,266.4 1082.3,270.2 1083.5,270.1 1084.8,268.1 1086.1,267.6 1087.3,269.0 1088.6,266.3 1089.9,266.3 1091.2,266.4 1092.4,264.1 1093.7,259.2 1095.0,254.9 1096.3,252.4 1097.5,249.9 1098.8,248.3 1100.1,247.9 1101.3,244.6 1102.6,244.9 1103.9,242.2 1105.2,237.4 1106.4,234.5 1107.7,229.9 1109.0,224.4 1110.3,222.8 1111.5,221.5 1112.8,221.0 1114.1,218.9 1115.3,219.2 1116.6,216.5 1117.9,215.4 1119.2,215.5 1120.3,214.6 1121.5,210.9 1122.7,209.6 1123.8,207.2 1125.0,205.3 1126.5,209.3 1128.1,214.2 1129.3,226.7 1130.6,242.4 1131.9,254.9 1133.2,261.6 1134.4,267.1 1135.7,271.5 1137.0,271.5 1138.3,272.7 1139.5,274.6 1140.8,276.5 1142.1,276.4 1143.4,277.7 1144.6,278.6 1145.9,279.1 1147.2,277.7 1148.4,277.5 1149.7,276.1 1151.0,275.1 1152.3,273.8 1153.5,274.0 1154.8,271.1 1156.1,270.5 1157.4,266.8 1158.6,264.9 1159.9,262.6 1161.2,260.9 1162.4,257.5 1163.7,254.4 1165.0,251.5 1166.3,248.8 1167.5,246.0 1168.8,244.6 1170.1,240.9 1171.4,239.6 1172.6,235.8 1173.9,233.5 1175.2,231.7 1176.4,229.5 1177.7,226.9 1179.0,223.3 1180.3,218.6 1181.5,214.3 1182.8,211.0 1184.1,207.8 1185.4,205.8 1186.6,206.0 1187.9,203.9 1189.2,204.0 1190.4,214.4 1191.7,226.9 1193.0,240.0 1194.3,251.9 1195.5,265.1 1196.8,269.9 1198.1,273.2 1199.4,278.2 1200.6,280.5 1201.9,285.5 1203.2,282.3 1204.5,279.1 1205.7,278.6 1207.0,275.5 1208.3,276.4 1209.5,274.0 1210.8,274.0 1212.1,276.2 1213.4,277.5 1214.6,277.9 1215.9,277.8 1217.2,273.6 1218.5,269.2 1219.7,266.4 1221.0,262.6 1222.3,257.9 1223.5,250.6 1224.8,246.4 1226.1,239.7 1227.4,235.2 1228.6,233.5 1229.9,227.7 1231.2,224.8 1232.5,222.6 1233.7,218.0 1235.0,216.0 1236.3,213.5 1237.5,210.6 1238.8,207.6 1240.1,204.7 1241.4,201.5 1242.6,201.4 1243.9,202.8 1245.2,202.9 1246.5,205.1 1247.7,205.3 1249.3,194.0 1250.8,181.9 1252.3,192.9 1253.8,204.0 1255.4,216.7 1256.6,224.3 1257.9,229.5 1260.2,239.7 1261.5,244.7 1262.7,248.4 1264.0,252.6 1265.3,257.7 1266.5,261.0 1267.8,265.1 1269.1,269.7 1270.4,267.5 1271.6,265.4 1272.9,263.0 1274.2,262.8 1275.5,260.4 1276.7,258.7 1278.0,255.9 1279.3,251.5 1280.5,249.2 1281.8,245.6 1283.1,243.5 1284.4,237.9 1285.6,233.5 1286.9,230.3 1288.2,224.5 1289.5,219.9 1290.7,215.7 1292.0,210.1 1293.3,204.9 1294.6,201.5 1295.8,201.5 1297.1,201.5 1298.4,201.8 1299.6,201.3 1300.9,201.5 1302.2,199.2 1303.5,196.5 1304.7,192.5 1306.0,190.4 1307.3,187.6 1308.6,184.9 1310.3,196.4 1311.9,195.3 1313.4,195.3 1314.9,195.1 1316.2,200.2 1317.5,205.9 1318.7,210.9 1320.0,214.2 1321.3,220.0 1322.6,223.4 1323.8,229.5 1325.1,231.8 1326.4,236.3 1327.6,240.6 1328.9,242.2 1330.2,247.1 1331.5,249.8 1332.7,251.8 1334.0,251.4 1335.3,253.4 1336.6,254.8 1337.8,254.9 1339.1,252.8 1340.4,251.9 1341.6,250.2 1342.9,248.0 1344.2,246.0 1345.5,244.6 1346.7,242.4 1348.0,240.3 1349.3,237.0 1350.6,234.6 1351.8,237.1 1353.1,233.8 1354.4,231.4 1355.7,228.8 1356.9,227.1 1358.2,225.0 1359.5,221.8 1360.7,217.3 1362.0,215.5 1363.3,212.2 1364.6,207.9 1365.8,204.9 1367.1,201.5 1368.4,197.7 1369.7,196.1 1370.9,192.6 1373.0,200.2 1374.2,196.8 1375.3,196.8 1376.5,193.3 1378.2,203.9 1379.8,212.9 1381.1,218.5 1382.4,222.9 1383.7,229.8 1384.9,235.2 1386.2,238.4 1387.5,245.3 1388.7,249.8 1390.0,252.7 1391.3,254.3 1392.6,256.4 1393.8,257.8 1395.1,260.0 1396.4,261.3 1397.7,261.7 1398.9,260.5 1400.2,261.8 1401.5,261.3 1402.7,257.3 1404.0,252.8 1405.3,249.4 1406.6,245.1 1407.8,242.2 1409.1,237.7 1410.4,232.3 1411.7,224.7 1412.9,220.4 1414.2,214.4 1415.5,209.1 1416.8,205.6 1418.0,203.5 1419.3,201.5 1420.6,196.4 1421.8,193.2 1423.1,186.9 1424.4,182.9 1425.7,179.0 1426.9,174.7 1428.1,171.5 1429.3,171.1 1430.5,169.0 1431.7,167.6 1432.9,164.0 1434.1,162.2 1435.3,160.7 1436.9,174.2 1438.4,187.5 1439.7,189.4 1440.9,192.6 1442.2,200.0 1443.5,206.4 1444.8,214.2 1446.0,209.9 1447.3,205.4 1448.6,200.6 1449.8,195.1 1451.1,209.7 1452.4,221.8 1453.7,233.4 1454.9,244.7 1456.7,220.6 1458.0,225.6 1459.3,230.7 1460.5,228.0 1461.6,224.2 1462.8,220.1 1464.0,216.0 1465.2,212.2 1466.4,209.1 1467.7,206.5 1468.9,206.7 1470.2,203.4 1471.5,202.7 1472.8,206.6 1474.0,200.3 1475.3,192.9 1476.6,187.1 1477.9,179.1 1479.1,178.4 1480.4,176.5 1481.7,182.5 1482.9,186.2 1484.2,186.8 1485.5,189.2 1486.8,190.8 1488.0,191.7 1489.3,193.6 1490.6,195.1 1491.9,195.9 1493.1,197.4 1494.4,197.2 1495.7,199.4 1496.9,200.5 1498.2,201.3 1499.5,202.6 1500.8,204.0 1502.0,211.7 1503.3,218.5 1504.6,225.0 1505.9,232.0 1507.6,252.4 1508.8,253.4 1510.0,253.3 1511.2,253.6 1512.4,253.7 1513.6,255.0 1514.8,256.2 1516.0,259.0 1517.3,262.2 1518.6,264.7 1519.9,266.4 1521.1,270.1 1522.4,271.4 1523.7,274.0 1524.9,276.0 1526.2,276.0 1527.5,277.3 1528.8,273.1 1530.0,267.7 1531.3,264.1 1532.6,257.6 1533.9,252.5 1535.1,248.6 1536.4,249.8 1537.7,250.3 1539.0,247.2 1540.2,243.5 1541.5,239.3 1542.8,237.0 1544.0,233.8 1545.3,230.7 1546.6,228.2 1547.9,227.0 1549.1,224.0 1550.4,222.0 1551.7,220.1 1553.0,216.7 1554.2,215.1 1555.5,212.2 1556.8,210.6 1558.0,208.1 1559.3,205.8 1560.6,203.5 1561.9,201.0 1563.4,206.1 1564.9,211.6 1567.0,242.2 1568.2,248.9 1569.5,255.3 1570.8,261.3 1572.0,265.9 1573.3,269.0 1574.6,272.7 1575.9,275.3 1577.1,271.5 1578.4,266.4 1579.7,267.1 1581.0,266.5 1582.2,265.7 1583.5,265.4 1584.8,266.4 1586.0,266.7 1587.3,265.8 1588.6,265.6 1589.9,260.8 1591.1,258.6 1592.4,253.7 1593.7,249.8 1595.0,246.6 1596.2,242.3 1597.5,240.3 1598.8,237.7 1600.1,233.7 1601.3,230.7 1602.6,228.9 1603.9,228.2 1605.1,225.1 1606.4,224.8 1607.7,224.4 1609.0,221.8 1610.2,220.3 1611.5,217.6 1612.8,216.3 1614.1,214.1 1615.3,211.1 1616.6,209.1 1617.9,207.8 1619.2,203.3 1620.6,196.3 1622.0,190.3 1623.4,186.7 1624.7,180.3 1626.8,193.8 1628.1,211.7 1629.3,229.5 1630.6,243.8 1631.9,258.7 1633.3,262.4 1634.8,266.6 1636.2,269.7 1637.9,263.4 1639.5,258.7 1640.8,260.1 1642.1,261.2 1643.3,262.4 1644.6,262.6 1645.9,261.0 1647.1,260.8 1648.4,258.8 1649.7,258.6 1651.0,257.5 1652.2,253.3 1653.5,251.6 1654.8,248.5 1656.1,243.8 1657.3,240.9 1658.6,236.9 1659.9,235.5 1661.2,231.5 1662.4,228.5 1663.7,224.4 1665.0,221.3 1666.2,221.6 1667.5,219.0 1668.8,216.3 1670.1,214.7 1671.3,212.9 1672.6,215.2 1673.9,216.2 1675.2,215.9 1676.4,213.4 1677.7,213.5 1679.0,211.3 1680.2,212.3 1681.5,210.0 1682.8,209.1 1684.0,209.2 1685.2,207.8 1686.4,206.6 1687.5,204.8 1688.7,204.5 1689.9,203.5 1691.4,215.6 1693.0,229.5 1694.2,230.6 1695.5,234.1 1696.8,235.2 1698.1,238.2 1699.3,239.7 1700.6,240.3 1701.9,242.7 1703.2,244.0 1704.4,244.3 1705.7,245.0 1707.0,247.0 1708.2,248.6 1709.5,247.5 1710.8,245.4 1712.1,244.6 1713.3,243.2 1714.6,243.5 1715.9,242.2 1717.2,239.6 1718.4,234.3 1719.7,230.2 1721.0,228.3 1722.3,225.0 1723.5,220.6 1724.8,217.3 1726.1,211.9 1727.3,206.8 1728.6,203.6 1729.9,197.3 1731.2,193.8 1732.4,189.6 1733.7,183.5 1735.0,179.6 1736.3,175.1 1737.5,170.2 1738.8,165.8 1740.1,162.0 1741.3,159.2 1742.6,157.8 1743.9,153.9 1745.2,151.1 1746.4,152.1 1747.7,152.0 1749.0,154.1 1750.3,154.4 1751.5,164.8 1752.8,176.0 1754.1,183.9 1755.3,192.3 1756.6,200.2 1757.9,206.6 1759.2,210.5 1760.4,217.5 1761.7,222.7 1763.0,226.5 1764.3,231.7 1765.5,237.1 1766.8,239.9 1768.1,243.2 1769.3,244.5 1770.6,247.3 1771.9,247.5 1773.2,246.4 1774.4,244.1 1775.7,245.3 1777.0,243.5 1778.3,238.7 1779.5,235.4 1780.8,233.1 1782.1,227.9 1783.4,225.1 1784.6,221.8 1785.9,217.9 1787.2,215.6 1788.4,213.5 1789.7,210.6 1791.0,206.6 1792.3,204.1 1793.5,202.9 1794.8,203.6 1796.1,201.5 1796.6,225.7 1798.2,222.6 1799.9,221.8 1801.1,217.1 1802.3,212.5 1803.4,208.2 1804.6,203.8 1805.8,201.2 1807.0,197.2 1808.1,192.9 1809.3,188.2 1810.8,200.3 1812.4,211.0 1813.9,221.8 1815.2,225.9 1816.4,230.9 1817.7,236.1 1819.0,239.6 1820.3,243.0 1821.5,246.9 1822.8,252.4 1824.1,256.0 1825.4,257.7 1826.6,259.6 1827.9,262.8 1829.2,265.3 1830.4,267.7 1831.7,269.1 1833.0,272.7 1834.3,272.8 1835.5,273.4 1836.8,274.0 1838.1,272.3 1839.4,273.1 1840.6,271.0 1841.9,270.2 1843.2,267.3 1844.5,264.1 1845.7,260.9 1847.0,257.5 1848.3,253.7 1849.5,251.6 1850.8,247.6 1852.1,246.7 1853.4,242.0 1854.6,241.2 1855.9,238.3 1857.2,235.6 1858.5,232.0 1859.7,226.9 1861.0,222.9 1862.3,220.7 1863.5,215.8 1864.8,211.5 1866.1,207.8 1867.3,206.2 1868.4,201.1 1869.6,199.5 1870.8,196.5 1871.9,193.8 1873.4,204.8 1874.8,217.3 1876.3,229.5 1877.5,237.6 1878.8,245.7 1880.1,251.2 1881.4,260.0 1882.6,263.5 1883.9,265.8 1885.2,271.0 1886.5,272.6 1887.7,275.8 1889.0,280.4 1890.3,286.0 1891.5,292.8 1892.8,298.2 1894.1,297.7 1895.4,297.3 1896.6,298.2 1897.9,298.5 1899.2,298.2 1900.4,297.9 1901.7,296.6 1903.0,290.2 1904.3,284.9 1905.6,282.4 1906.9,279.7 1908.2,278.2 1909.5,275.8 1910.8,269.7 1912.1,264.0 1913.4,259.4 1914.7,254.1 1916.0,247.2 1917.3,245.9 1918.6,243.1 1919.9,242.9 1921.2,240.9 1922.5,239.4 1923.8,237.0 1925.1,232.7 1926.4,229.4 1927.7,225.4 1929.0,221.3 1930.1,218.8 1931.3,217.1 1932.5,214.3 1933.6,210.9 1935.2,218.2 1936.7,226.5 1938.0,234.4 1939.3,243.7 1940.6,252.8 1941.9,261.5 1943.2,265.4 1944.5,271.0 1945.8,276.5 1947.1,280.1 1948.4,286.2 1949.7,286.7 1951.0,285.9 1952.3,284.8 1953.6,284.9 1954.9,287.0 1956.2,289.7 1957.5,292.2 1958.8,295.3 1960.1,295.1 1961.4,293.7 1962.7,293.0 1964.0,291.3 1965.3,291.4 1966.6,288.2 1967.9,282.5 1969.2,278.3 1970.5,274.5 1971.8,271.6 1973.1,272.0 1974.4,268.9 1975.7,268.1 1977.0,266.3 1978.3,264.6 1979.6,261.5 1980.9,256.7 1982.2,251.3 1983.5,244.6 1984.8,241.5 1986.1,237.1 1987.4,231.3 1988.7,228.1 1990.0,223.9 1991.1,222.8 1992.3,222.5 1993.5,220.7 1994.6,219.2 1995.8,218.0 1997.0,216.1 1998.2,217.0 1999.3,219.8 2000.5,220.3 2001.7,221.3 2003.0,220.0 2004.3,225.2 2005.6,230.9 2006.9,237.7 2008.2,242.0 2009.4,246.5 2010.7,249.9 2012.0,255.0 2013.3,257.1 2014.6,261.3 2015.9,264.0 2017.2,266.7 2018.5,264.5 2019.8,259.4 2021.1,256.8 2022.4,253.7 2023.7,258.2 2025.0,261.5 2026.3,259.1 2027.6,257.9 2028.9,257.7 2030.2,255.7 2031.5,255.0 2032.8,252.3 2034.1,251.0 2035.4,250.2 2036.7,248.2 2038.0,245.3 2039.3,244.6 2040.6,241.0 2041.9,240.3 2043.2,237.2 2044.5,233.4 2045.8,232.6 2047.1,227.9 2048.4,226.5 2049.6,224.4 2050.7,223.9 2051.9,221.8 2053.0,219.0 2054.2,218.8 2055.3,216.3 2056.5,215.3 2057.6,213.6 2058.8,210.9 2060.1,212.9 2061.4,215.7 2062.7,217.5 2064.0,220.7 2065.3,222.5 2066.6,223.9 2067.9,227.5 2069.2,230.7 2070.5,234.2 2071.8,235.4 2073.1,238.3 2074.4,242.0 2075.7,246.6 2077.0,250.5 2078.3,253.8 2079.6,257.6 2080.9,260.5 2082.2,263.2 2083.5,267.3 2084.8,269.3 2086.1,265.5 2087.4,260.2 2088.5,258.3 2089.7,254.7 2090.8,254.6 2092.0,251.5 2093.1,248.6 2094.3,246.7 2095.4,245.6 2096.6,241.7 2097.7,240.7 2099.0,239.8 2100.3,240.3 2101.6,241.7 2102.9,240.7 2104.1,239.5 2105.2,238.2 2106.4,235.2 2107.5,233.4 2108.7,231.5 2109.9,229.6 2111.0,227.7 2112.2,226.5 2113.3,223.9 2114.7,222.1 2116.2,217.8 2117.6,215.4 2119.0,212.2 2121.1,205.2 2122.4,216.6 2123.7,229.1 2125.0,232.2 2126.3,236.4 2127.6,240.3 2128.9,243.9 2130.2,248.6 2131.5,251.1 2132.8,250.9 2134.1,252.8 2135.4,254.3 2136.7,254.3 2138.0,254.5 2139.3,255.0 2140.6,258.3 2141.9,262.1 2143.2,267.0 2144.5,270.6 2145.8,273.2 2147.1,267.8 2148.4,261.5 2149.7,264.7 2151.0,266.9 2152.3,268.0 2153.6,265.2 2154.9,260.5 2156.2,257.0 2157.5,254.2 2158.8,249.8 2160.1,248.0 2161.4,247.3 2162.7,245.1 2164.0,243.2 2165.3,242.0 2166.6,241.6 2167.8,240.4 2169.1,240.7 2170.4,240.7 2171.7,239.9 2173.0,238.2 2174.3,238.0 2175.6,238.2 2176.9,235.2 2178.1,234.3 2179.3,231.2 2180.5,228.1 2181.7,227.5 2182.9,223.9 2184.5,229.8 2186.0,236.9 2187.3,234.3 2188.6,231.7 2189.9,237.5 2191.2,242.5 2192.5,247.1 2193.8,253.1 2195.1,257.6 2196.4,259.1 2197.7,261.3 2199.0,262.3 2200.3,265.0 2201.6,265.4 2202.9,267.7 2204.2,267.9 2205.5,270.6 2207.3,260.2 2209.0,267.1 2210.7,275.8 2212.0,277.0 2213.3,275.8 2215.0,267.3 2216.7,260.2 2218.0,246.1 2219.3,234.3 2220.8,231.7 2222.4,230.4 2223.7,245.9 2225.0,244.4 2226.3,244.1 2227.6,241.2 2228.9,240.6 2230.2,239.4 2231.5,236.0 2232.8,235.6 2234.1,234.0 2235.4,233.2 2236.7,230.2 2238.0,228.4 2239.3,226.5 2240.6,224.3 2241.9,223.9 2243.2,222.2 2244.5,218.2 2245.8,217.4 2247.1,223.7 2248.3,229.5 2249.6,236.3 2250.9,242.0 2252.2,246.5 2253.5,252.4 2254.8,257.9 2256.1,263.8 2257.4,269.3 2259.0,270.7 2260.6,270.6 2261.8,272.4 2263.0,273.1 2264.3,273.6 2265.5,273.0 2266.8,274.7 2268.0,276.2 2269.2,276.2 2270.5,277.6 2271.7,278.4 2273.0,276.2 2274.3,270.9 2275.6,269.5 2276.9,265.4 2278.2,261.8 2279.5,259.9 2280.8,258.6 2282.1,254.3 2283.4,252.5 2284.7,249.8 2286.0,247.0 2287.3,245.6 2288.6,243.3 2289.9,238.9 2291.2,236.9 2292.5,235.2 2293.8,234.6 2295.1,232.1 2296.4,230.4 2298.2,236.9 2299.4,233.5 2300.5,232.3 2301.7,228.7 2302.9,226.5 2304.2,222.2 2305.5,216.8 2306.8,215.0 2308.1,209.6 2309.4,219.9 2310.7,230.6 2312.0,239.4 2313.3,247.1 2314.6,251.9 2315.9,259.0 2317.2,265.4 2318.5,267.9 2319.8,271.3 2321.1,274.1 2322.4,275.1 2323.7,277.8 2325.0,281.5 2326.3,283.6 2327.5,284.6 2328.8,285.1 2330.1,286.5 2331.4,288.6 2332.7,289.9 2334.0,290.9 2335.3,287.9 2336.6,282.6 2337.9,278.4 2339.2,274.0 2340.5,268.2 2341.8,264.2 2343.1,259.2 2344.4,255.0 2345.7,251.9 2347.0,247.2 2348.3,243.4 2349.6,240.2 2350.9,236.9 2352.2,234.4 2353.5,231.8 2354.8,230.1 2356.1,226.7 2357.4,225.2 2358.7,223.3 2360.0,220.0 2361.3,216.8 2362.6,212.8 2363.9,210.7 2365.2,208.3 2366.4,206.5 2367.5,204.1 2368.7,202.3 2369.9,199.2 2371.4,208.6 2373.0,216.1 2374.3,220.8 2375.6,226.5 2376.9,231.2 2378.2,235.9 2379.5,242.0 2380.8,245.4 2382.1,249.9 2383.4,253.7 2384.7,258.9 2386.0,257.1 2387.3,255.0 2388.6,257.7 2389.9,259.5 2391.2,261.9 2392.5,263.0 2393.8,265.0 2395.1,268.1 2396.4,270.1 2397.7,269.5 2399.0,266.8 2400.3,265.4 2401.6,255.7 2402.9,248.5 2404.2,244.7 2405.5,242.9 2406.7,241.0 2408.0,237.1 2409.3,234.9 2410.6,233.4 2411.9,230.4 2413.2,229.6 2414.5,226.1 2415.8,224.8 2417.1,222.6 2418.4,219.4 2419.7,218.7 2421.0,215.9 2422.3,213.0 2423.6,210.9 2424.9,209.8 2426.2,207.2 2427.5,204.4 2428.7,200.8 2429.9,198.5 2431.0,197.8 2432.2,194.8 2433.8,203.1 2435.3,213.5 2436.6,211.1 2437.9,209.6 2439.2,217.2 2440.5,224.9 2441.8,234.3 2443.1,238.3 2444.4,243.7 2445.7,249.6 2447.0,255.0 2448.3,259.1 2449.6,261.3 2450.9,263.2 2452.2,267.3 2453.5,269.2 2454.8,272.7 2456.1,271.5 2457.4,269.9 2458.7,270.2 2460.0,267.5 2461.3,266.7 2462.6,265.1 2463.9,262.4 2465.2,260.6 2466.5,257.6 2467.8,255.0 2469.1,253.9 2470.4,250.6 2471.7,249.2 2473.0,247.0 2474.3,244.6 2475.6,240.8 2476.9,237.0 2478.2,233.0 2479.5,229.1 2480.8,225.8 2482.1,224.0 2483.4,220.3 2484.7,217.1 2485.9,212.8 2487.2,210.9 2488.4,206.6 2489.6,201.4 2490.8,197.2 2491.9,193.4 2493.1,189.4 2494.3,184.9 2495.9,192.7 2497.6,201.8 2498.9,200.6 2500.2,200.5 2501.5,206.4 2502.8,212.1 2504.1,217.8 2505.4,223.9 2506.7,233.3 2508.0,244.6 2510.1,240.7 2511.4,196.6 2512.6,209.9 2513.7,223.9 2514.9,226.9 2516.1,229.2 2517.2,231.8 2518.4,234.3 2519.7,232.5 2521.0,229.6 2522.3,226.9 2523.6,223.9 2524.9,221.0 2526.2,219.9 2527.5,219.1 2528.8,216.1 2530.1,216.2 2531.4,213.5 2533.5,210.9 2535.3,190.1 2536.6,179.5 2537.9,170.6 2540.0,186.2 2541.8,178.4" fill="none" stroke="#00A2DD" stroke-width="1.35" stroke-linejoin="round"/>
<path d="M646 333.6 V524.6" stroke="#4055A3" stroke-width="1.5"/>
<polyline points="645.6,386.1 646.9,389.2 648.2,391.0 649.5,390.1 650.7,392.0 652.0,395.0 653.3,398.2 654.6,400.1 655.8,402.1 657.1,403.2 658.4,406.2 659.6,408.4 660.9,410.3 662.2,411.4 663.5,411.0 664.7,412.6 666.0,413.4 667.3,415.2 668.6,415.4 669.8,417.4 671.1,417.7 672.4,417.0 673.6,417.2 674.9,417.9 676.2,415.4 677.5,412.9 678.7,411.0 680.0,410.5 681.3,408.3 682.6,406.7 683.8,405.2 685.1,404.7 686.4,402.0 687.6,400.5 688.9,397.9 690.2,395.6 691.5,394.8 692.7,393.7 694.4,381.2 696.0,370.8 697.3,384.9 698.6,398.8 699.8,402.0 701.0,402.7 702.2,403.9 703.4,385.1 704.7,368.3 705.9,371.0 707.0,372.2 708.2,373.6 709.4,375.6 710.6,375.9 711.8,378.0 713.1,379.3 714.4,379.3 715.7,382.5 716.9,382.3 718.2,386.7 719.5,387.4 720.7,392.2 722.0,395.1 723.3,397.6 724.6,397.7 725.8,398.1 727.1,398.2 728.4,399.7 729.7,398.6 730.9,398.8 732.2,400.8 733.5,400.4 734.7,403.0 736.0,404.1 737.3,403.9 738.6,404.1 739.8,404.8 741.1,406.1 742.4,405.2 743.7,407.1 744.9,407.7 746.2,408.2 747.5,410.3 748.7,408.2 750.0,407.7 751.3,404.5 752.6,403.9 753.8,400.1 755.1,393.0 756.4,388.6 757.7,382.2 758.9,372.8 760.2,365.7 762.0,382.3 763.5,377.2 765.8,401.4 767.1,399.2 768.4,395.0 769.6,390.9 770.9,387.4 772.4,392.5 774.0,398.0 775.5,402.6 776.8,406.3 778.0,408.9 779.3,412.0 780.6,416.3 781.8,420.9 783.1,423.0 784.4,423.6 785.7,422.1 786.9,424.5 788.2,424.4 789.5,425.1 790.8,423.2 792.0,424.3 793.3,425.9 794.6,424.8 795.8,427.5 797.1,427.3 798.4,428.9 799.7,428.4 800.9,430.7 802.2,428.8 803.5,430.4 804.8,430.7 806.0,430.8 807.3,428.0 808.6,426.9 809.8,426.8 811.9,421.7 813.2,425.4 814.4,426.8 815.8,418.6 817.2,411.6 818.6,401.6 820.0,395.0 821.4,391.4 822.8,387.6 824.2,385.9 825.5,380.9 826.9,379.0 828.3,382.3 829.6,381.5 831.0,384.8 832.5,391.2 834.0,396.3 835.5,393.1 836.9,392.2 838.4,391.2 840.0,398.5 841.7,403.9 842.9,407.6 844.2,412.3 845.5,417.9 846.8,417.2 848.0,415.0 849.3,412.7 850.6,412.8 851.9,414.9 853.1,413.1 854.4,413.3 855.7,414.9 856.9,416.4 858.2,417.4 859.5,416.1 860.8,417.9 862.0,417.6 863.2,416.9 864.4,418.4 865.6,419.5 866.8,419.6 868.1,420.3 869.3,420.1 870.5,420.6 871.7,419.7 873.5,412.8 874.8,413.4 876.0,412.7 877.3,412.8 878.6,406.5 879.9,402.3 881.1,396.3 882.4,392.8 883.7,389.1 884.9,387.4 886.2,387.9 887.5,389.8 888.8,388.2 890.0,389.9 891.8,378.5 893.9,378.5 895.1,385.7 896.4,392.5 897.7,388.3 899.0,384.8 900.2,388.7 901.5,391.4 902.8,396.3 904.0,401.1 905.3,402.3 906.6,406.8 907.9,409.6 909.1,411.8 910.4,416.6 911.7,415.9 913.0,413.7 914.2,412.5 915.5,412.8 916.8,413.1 918.0,415.2 919.3,417.9 920.6,419.6 921.9,424.1 923.1,426.5 924.4,429.4 925.6,432.3 926.8,433.6 928.0,435.2 929.2,434.4 930.4,436.5 931.6,437.4 932.8,439.6 934.1,436.7 935.4,433.2 936.5,434.8 937.7,436.6 938.9,437.0 940.1,434.3 941.3,429.5 942.5,426.6 943.7,423.5 944.9,418.6 946.0,416.6 947.2,412.7 948.4,411.3 949.6,407.8 950.7,407.1 951.9,403.9 954.2,419.2 955.5,413.3 956.7,409.0 958.8,426.8 960.1,427.5 961.3,429.7 962.6,431.8 963.9,434.5 965.1,437.9 966.4,443.0 967.7,447.2 969.0,450.0 970.2,452.4 971.5,456.2 972.8,458.7 974.1,456.8 975.3,457.8 976.6,457.0 977.9,455.3 979.1,453.6 980.4,452.8 981.7,452.5 983.0,452.2 984.2,450.0 985.5,450.6 986.8,450.4 988.1,449.7 989.3,449.2 990.6,449.4 991.9,451.0 993.4,451.5 994.9,449.8 996.5,449.7 998.0,443.4 999.5,437.0 1000.8,437.0 1002.1,434.5 1003.3,428.9 1004.6,422.0 1005.9,416.6 1007.1,416.1 1008.4,412.2 1009.7,409.1 1011.0,409.1 1012.2,406.5 1013.5,406.9 1014.8,409.1 1016.1,412.3 1017.3,412.8 1018.6,410.2 1019.9,406.5 1021.2,407.3 1022.4,411.0 1023.7,413.2 1025.0,415.8 1026.2,417.3 1027.5,420.5 1028.8,422.3 1030.1,422.2 1031.3,424.4 1032.6,426.2 1033.9,428.1 1035.2,428.9 1036.4,425.7 1037.7,427.2 1039.0,425.0 1040.2,425.6 1041.5,424.5 1042.8,424.3 1044.1,423.5 1045.3,423.8 1046.6,422.1 1047.9,421.7 1049.2,421.2 1050.4,421.7 1051.7,422.1 1053.0,425.0 1054.2,424.9 1055.5,426.4 1056.8,425.6 1058.1,425.5 1059.3,422.9 1060.6,424.1 1061.9,423.8 1063.2,423.0 1064.4,421.7 1065.7,415.8 1067.0,409.4 1068.2,403.9 1069.5,400.4 1070.8,398.0 1072.1,393.7 1073.3,393.9 1074.6,395.5 1075.9,396.3 1077.2,402.2 1078.4,409.5 1079.7,414.1 1081.1,412.5 1082.6,410.3 1084.0,406.5 1085.6,411.3 1087.1,413.5 1088.6,417.9 1089.9,418.8 1091.2,421.3 1092.4,422.3 1093.7,424.5 1095.0,426.9 1096.3,428.1 1097.5,430.8 1098.8,431.3 1100.1,433.4 1101.3,432.7 1102.6,434.9 1103.9,438.3 1105.2,438.3 1106.4,437.2 1107.7,438.0 1109.0,437.0 1110.3,437.0 1111.5,439.5 1112.8,439.8 1114.1,438.7 1115.3,438.3 1116.6,438.9 1117.9,441.1 1119.2,443.4 1120.4,443.0 1121.5,444.7 1122.7,445.2 1123.9,444.9 1125.1,445.6 1126.3,445.9 1127.8,432.7 1129.3,421.7 1130.6,417.7 1131.9,414.8 1133.2,410.1 1134.4,405.2 1135.7,407.3 1137.0,411.9 1138.3,415.8 1139.5,417.7 1140.8,421.7 1142.1,425.0 1143.4,425.7 1144.6,428.5 1145.9,429.6 1147.2,431.9 1148.4,423.0 1149.7,426.6 1151.0,428.1 1152.3,429.6 1153.5,430.4 1154.8,433.4 1156.1,435.7 1157.4,438.5 1158.6,444.3 1159.9,449.3 1161.2,452.3 1162.4,451.3 1163.7,452.3 1165.0,452.2 1166.3,452.0 1167.5,452.9 1168.8,452.3 1170.1,453.3 1171.4,452.4 1172.6,451.4 1173.9,452.7 1175.2,451.0 1176.4,451.3 1177.7,453.3 1179.0,453.8 1180.3,454.9 1181.5,454.8 1182.7,456.4 1183.9,455.0 1185.1,456.7 1186.2,456.6 1187.4,457.4 1188.9,445.2 1190.4,431.9 1191.7,423.2 1193.0,412.0 1194.3,401.4 1195.8,398.2 1197.3,397.9 1198.8,396.3 1200.3,402.9 1201.7,409.3 1203.2,414.1 1204.5,416.3 1205.7,418.4 1207.0,417.7 1208.3,422.2 1209.5,423.3 1210.8,424.3 1212.1,426.1 1213.4,428.6 1214.6,430.0 1215.9,429.2 1217.2,431.9 1218.5,436.7 1219.7,440.4 1221.0,442.5 1222.3,447.2 1223.7,444.1 1225.2,439.8 1226.6,435.7 1227.8,435.0 1229.0,437.0 1230.2,435.2 1231.4,436.8 1232.6,436.5 1233.8,436.1 1235.0,437.0 1236.3,440.2 1237.5,442.9 1238.8,445.9 1240.1,443.1 1241.4,443.5 1242.6,438.9 1243.9,436.8 1245.2,436.3 1246.5,434.5 1247.7,433.6 1249.0,431.1 1250.3,429.5 1251.5,426.8 1252.8,425.4 1254.1,423.0 1255.4,419.1 1256.6,415.5 1257.9,412.8 1258.9,414.1 1260.2,412.6 1261.5,409.6 1262.7,408.3 1264.0,408.8 1265.3,406.5 1266.5,404.9 1267.8,405.9 1269.1,405.4 1270.4,403.9 1271.6,405.2 1272.9,407.5 1274.2,409.4 1275.5,411.1 1276.7,411.6 1278.0,413.4 1279.3,416.5 1280.5,420.5 1281.8,419.5 1283.1,419.1 1284.4,417.9 1285.6,416.5 1286.9,417.5 1288.2,418.1 1289.5,415.6 1290.7,415.4 1292.0,417.4 1293.3,418.9 1294.6,421.2 1296.1,418.3 1297.6,416.7 1299.1,412.8 1300.7,415.7 1302.2,419.7 1303.5,420.4 1304.7,420.2 1306.0,420.7 1307.3,422.1 1308.6,419.9 1309.8,422.4 1311.1,421.7 1312.4,418.2 1313.6,416.2 1314.9,412.8 1316.2,407.8 1317.5,401.4 1318.7,395.0 1320.3,392.1 1321.8,389.9 1323.3,393.5 1324.8,393.8 1326.4,397.6 1327.9,396.7 1329.4,394.7 1331.0,393.7 1332.4,396.4 1333.8,399.9 1335.3,401.4 1336.6,405.5 1337.8,408.1 1339.1,410.3 1340.4,413.3 1341.6,417.2 1342.9,420.5 1344.2,420.7 1345.5,421.8 1346.7,424.9 1348.0,423.4 1349.3,425.6 1350.6,428.0 1351.8,428.3 1353.1,429.7 1354.4,431.1 1355.7,433.2 1356.8,431.9 1358.0,433.1 1359.2,432.2 1360.3,433.0 1361.5,432.6 1362.7,434.4 1363.8,434.5 1365.0,433.0 1366.2,433.6 1367.3,434.5 1368.5,432.7 1369.7,433.2 1370.9,430.9 1372.2,430.3 1373.5,429.1 1374.7,429.5 1376.0,427.5 1377.3,426.8 1378.6,421.9 1379.8,418.8 1381.1,412.7 1382.4,409.0 1383.6,406.1 1384.7,401.8 1385.9,397.3 1387.1,394.7 1388.2,389.9 1389.8,395.8 1391.3,402.6 1392.6,402.5 1393.8,400.1 1395.1,403.9 1396.4,405.2 1397.7,408.3 1398.9,411.6 1400.2,412.8 1401.5,414.1 1402.7,414.7 1404.0,415.6 1405.3,416.3 1406.6,416.3 1407.8,416.1 1409.1,418.0 1410.4,416.4 1411.7,417.8 1412.9,418.3 1414.2,417.9 1415.5,418.7 1416.8,421.5 1418.0,424.0 1419.3,429.5 1420.6,430.9 1421.8,434.5 1423.0,434.9 1424.2,436.7 1425.3,435.1 1426.5,437.9 1427.6,435.9 1428.8,436.1 1429.9,437.6 1431.1,438.1 1432.3,440.3 1433.4,440.7 1434.6,440.1 1435.8,435.5 1437.1,429.4 1438.5,426.1 1439.9,423.4 1441.2,419.4 1442.6,418.2 1444.0,414.1 1445.5,418.0 1447.0,421.9 1448.6,426.8 1450.2,423.4 1451.9,419.2 1453.2,411.1 1454.4,405.2 1456.7,420.5 1458.2,421.6 1459.8,425.1 1461.3,425.6 1462.8,423.5 1464.4,422.8 1465.9,423.0 1467.2,426.1 1468.4,430.2 1469.7,434.6 1471.0,438.0 1472.3,442.3 1473.5,446.7 1474.9,444.0 1476.3,442.1 1477.7,441.3 1479.1,439.1 1480.4,442.1 1481.7,445.8 1482.9,450.5 1484.2,452.0 1485.5,455.8 1486.8,461.5 1488.0,463.8 1489.3,467.6 1490.6,471.3 1491.9,472.3 1493.1,476.4 1494.4,480.2 1495.7,481.6 1496.9,485.8 1498.2,487.9 1499.9,487.0 1501.5,485.4 1503.1,477.4 1504.6,470.1 1506.1,464.0 1507.6,454.8 1509.7,466.3 1510.9,461.5 1512.2,457.4 1513.5,461.1 1514.8,465.0 1516.0,464.1 1517.3,461.9 1518.6,462.2 1519.9,459.9 1521.1,462.3 1522.4,464.3 1523.7,466.2 1524.9,469.5 1526.2,470.1 1527.5,473.7 1528.8,475.4 1530.0,476.3 1531.3,478.3 1532.6,480.8 1533.9,482.8 1535.1,483.1 1536.4,484.9 1537.7,489.2 1539.0,488.3 1540.2,492.3 1541.5,493.2 1542.8,494.3 1544.0,496.3 1545.3,494.6 1546.6,496.1 1547.9,498.4 1549.1,496.8 1550.4,497.9 1551.7,499.4 1553.0,500.7 1554.2,500.2 1555.5,500.6 1556.8,502.7 1558.0,501.5 1559.3,503.2 1560.6,502.1 1561.9,498.6 1563.1,495.6 1564.4,480.2 1565.7,467.6 1567.0,458.6 1568.2,447.2 1569.4,444.1 1570.6,442.6 1571.7,440.5 1572.9,437.0 1574.1,435.7 1575.6,445.3 1577.1,454.8 1578.4,454.0 1579.7,455.0 1581.0,457.6 1582.2,457.8 1583.5,457.4 1584.8,458.9 1586.0,460.9 1587.3,463.0 1588.6,462.2 1589.9,464.8 1591.1,466.3 1592.4,465.2 1593.7,465.1 1595.0,465.1 1596.2,465.4 1597.5,465.0 1598.8,466.3 1600.1,466.7 1601.3,468.5 1602.6,470.5 1603.9,472.5 1605.1,473.9 1606.4,473.9 1607.7,475.9 1609.0,476.5 1610.2,479.0 1611.5,478.0 1612.8,479.1 1614.1,482.5 1615.3,483.2 1616.6,484.1 1617.8,484.1 1618.9,485.5 1620.1,486.1 1621.3,487.4 1622.5,488.4 1623.7,485.5 1625.0,482.7 1626.3,480.3 1627.5,467.2 1628.8,452.3 1630.3,447.5 1631.9,440.8 1633.1,439.7 1634.4,438.2 1635.7,437.0 1637.0,444.0 1638.2,452.3 1639.5,450.1 1640.8,447.8 1642.1,443.4 1643.3,444.0 1644.6,446.9 1645.9,448.3 1647.1,449.6 1648.4,449.1 1649.7,452.1 1651.0,452.5 1652.2,454.8 1653.4,454.2 1654.6,455.5 1655.7,456.0 1656.9,456.1 1658.0,456.7 1659.2,456.8 1660.3,456.4 1661.5,455.3 1662.7,457.7 1663.8,458.1 1665.0,457.4 1666.2,459.5 1667.5,459.9 1668.8,459.3 1670.1,460.8 1671.3,461.7 1672.6,464.3 1673.9,465.0 1675.2,465.6 1676.4,465.0 1677.7,467.7 1679.0,468.2 1680.2,468.4 1681.5,467.5 1682.8,468.1 1684.1,466.9 1685.3,466.2 1686.6,467.5 1687.9,466.6 1689.2,465.5 1690.4,454.4 1691.7,444.7 1693.0,444.6 1694.2,442.3 1695.5,440.6 1696.8,439.3 1698.1,438.3 1699.3,436.6 1700.6,433.4 1701.9,431.7 1703.2,428.9 1704.4,430.4 1705.7,434.8 1707.0,436.2 1708.2,439.6 1709.8,442.5 1711.3,442.1 1712.8,444.7 1714.3,449.7 1715.7,455.8 1717.2,461.2 1718.4,462.0 1719.7,463.5 1721.0,464.5 1722.4,464.6 1723.8,461.3 1725.2,461.9 1726.6,459.9 1727.8,461.3 1729.0,462.3 1730.1,462.1 1731.3,462.8 1732.5,463.3 1733.7,464.5 1735.0,464.9 1736.3,464.8 1737.5,465.1 1738.8,466.5 1740.1,466.1 1741.3,467.6 1742.6,466.6 1743.9,466.0 1745.2,464.3 1746.4,462.9 1747.7,463.3 1749.0,463.2 1750.3,461.2 1751.5,456.8 1752.8,454.4 1754.1,451.0 1755.3,448.1 1756.6,443.4 1757.9,441.2 1759.2,437.3 1760.4,434.2 1761.7,433.4 1763.0,429.0 1764.3,426.8 1766.3,417.9 1768.1,425.6 1769.7,420.3 1771.4,417.9 1772.8,421.2 1774.1,421.4 1775.5,423.9 1776.9,426.1 1778.3,428.9 1779.5,428.5 1780.8,430.3 1782.1,429.5 1783.4,430.1 1784.6,430.7 1785.9,431.9 1787.2,434.7 1788.4,433.8 1789.7,437.0 1791.0,438.3 1792.3,437.6 1793.5,438.1 1794.8,439.9 1796.1,440.1 1796.3,393.2 1797.6,392.5 1798.8,391.3 1800.1,392.5 1801.3,393.1 1802.6,392.0 1803.8,391.2 1805.1,391.8 1806.3,391.8 1807.6,389.2 1808.8,389.9 1810.1,385.5 1811.4,383.7 1812.6,378.5 1813.9,378.7 1815.2,375.4 1816.4,375.9 1817.7,375.3 1819.0,373.4 1820.3,372.1 1821.5,371.7 1822.8,370.1 1824.1,368.2 1825.4,367.2 1826.6,367.0 1828.1,366.1 1829.5,368.4 1831.0,368.3 1833.0,379.7 1834.3,378.7 1835.5,380.1 1836.8,379.4 1838.1,379.7 1839.4,383.4 1840.6,388.8 1841.9,390.9 1843.2,395.0 1844.5,394.7 1845.7,394.2 1847.0,393.5 1848.3,393.3 1849.5,394.0 1850.8,393.7 1852.1,394.1 1853.4,391.4 1854.6,393.4 1855.9,392.1 1857.2,389.7 1858.5,391.1 1859.7,389.9 1861.0,389.9 1862.3,390.5 1863.5,389.5 1864.8,391.0 1866.1,391.3 1867.4,392.3 1868.6,391.7 1869.9,392.1 1871.2,392.7 1872.5,393.0 1873.7,392.5 1875.0,387.0 1876.3,381.7 1877.5,378.5 1878.8,373.7 1880.1,368.0 1881.4,364.5 1882.6,364.0 1883.9,365.2 1885.2,366.5 1886.5,367.0 1887.7,371.2 1889.0,375.1 1890.3,379.8 1891.5,382.3 1892.8,384.0 1894.1,388.2 1895.4,389.6 1896.6,393.7 1896.7,395.1 1898.0,399.0 1899.2,401.7 1900.5,404.2 1901.7,408.0 1903.0,412.0 1904.3,407.3 1905.6,401.6 1906.9,402.2 1908.2,404.2 1909.5,403.1 1910.8,403.7 1912.1,406.1 1913.4,405.5 1914.7,406.9 1916.0,406.5 1917.3,409.7 1918.6,409.5 1919.9,412.4 1921.2,412.6 1922.5,413.3 1923.8,412.1 1925.1,410.3 1926.4,407.1 1927.7,406.4 1929.0,402.9 1930.2,400.7 1931.5,400.9 1932.8,401.6 1934.1,398.3 1935.4,399.0 1936.7,395.2 1938.0,391.8 1939.3,386.0 1940.6,388.5 1941.9,390.7 1943.2,390.2 1944.5,393.4 1945.8,395.1 1947.1,399.3 1948.4,402.9 1949.7,400.9 1951.0,399.0 1952.3,398.3 1953.6,394.6 1954.9,393.8 1956.2,395.0 1957.5,399.3 1958.8,403.0 1960.1,405.2 1961.4,406.8 1962.7,410.1 1964.0,411.8 1965.3,416.4 1966.6,416.7 1967.9,420.1 1969.2,423.7 1970.5,418.7 1971.8,412.0 1973.0,414.9 1974.2,415.2 1975.4,418.4 1976.6,417.7 1977.9,420.9 1979.1,422.4 1980.6,410.7 1982.2,401.6 1983.5,397.6 1984.8,394.2 1986.1,390.4 1987.4,388.6 1988.7,387.6 1990.0,387.1 1991.3,385.7 1992.6,386.1 1993.9,383.6 1995.2,384.2 1996.5,383.4 1997.8,381.3 1999.1,378.7 2000.4,378.0 2001.7,373.4 2003.0,372.1 2004.3,370.0 2005.6,367.8 2006.7,365.1 2007.9,364.6 2009.1,361.1 2010.3,358.5 2011.5,356.2 2013.0,360.8 2014.4,365.7 2015.8,372.1 2017.2,375.6 2018.5,377.4 2019.8,377.8 2021.1,377.2 2022.4,379.4 2023.7,378.8 2025.0,380.8 2026.3,381.9 2027.6,382.4 2028.9,386.0 2030.2,388.3 2031.5,388.8 2032.8,389.9 2034.1,388.8 2035.4,387.3 2036.6,388.2 2037.7,390.3 2038.9,392.0 2040.0,393.4 2041.2,394.6 2042.3,396.0 2043.5,399.2 2044.6,401.4 2045.8,401.6 2047.1,403.3 2048.3,403.5 2049.5,402.5 2050.8,404.1 2052.0,406.5 2053.3,407.7 2054.5,407.2 2055.8,408.0 2057.0,409.2 2058.3,409.4 2059.7,403.0 2061.2,398.8 2062.7,392.5 2064.0,387.2 2065.3,383.8 2066.6,377.8 2067.9,373.0 2069.2,372.2 2070.5,370.6 2071.8,369.1 2073.1,372.4 2074.4,375.3 2075.7,379.8 2077.0,382.4 2078.3,384.7 2079.6,387.1 2080.9,389.9 2082.2,393.7 2083.5,395.9 2084.8,397.7 2086.1,396.9 2087.4,396.5 2088.6,392.7 2089.9,392.5 2091.2,393.2 2092.5,393.8 2093.8,393.7 2095.1,395.6 2096.4,396.1 2097.7,395.1 2099.0,399.0 2100.3,403.9 2101.6,408.6 2102.9,412.0 2104.2,413.6 2105.5,413.6 2106.8,415.9 2108.1,415.5 2109.4,415.9 2110.7,418.5 2112.0,419.0 2113.3,418.8 2114.6,417.5 2115.9,417.1 2117.2,418.0 2118.5,415.9 2119.8,411.6 2121.1,405.2 2122.4,400.3 2123.7,398.8 2125.0,395.0 2126.3,391.7 2127.6,389.6 2128.9,387.2 2130.2,384.8 2131.5,380.8 2132.8,380.2 2134.1,379.1 2135.4,377.2 2136.7,375.0 2138.0,375.1 2139.3,373.0 2140.6,373.0 2141.9,380.9 2143.2,385.6 2144.5,392.8 2145.8,399.0 2147.1,396.2 2148.4,391.1 2149.7,388.6 2151.0,394.5 2152.3,397.8 2153.6,402.0 2154.9,408.1 2156.0,408.5 2157.2,408.1 2158.3,409.8 2159.5,408.5 2160.6,407.6 2161.8,407.5 2162.9,407.7 2164.1,409.2 2165.3,409.4 2166.6,412.1 2167.8,412.2 2169.1,415.1 2170.4,417.6 2171.7,419.8 2173.0,421.6 2174.3,422.5 2175.6,422.9 2176.9,422.9 2178.2,423.2 2179.5,422.9 2180.8,421.3 2182.1,421.6 2183.4,418.3 2184.7,413.3 2186.0,410.7 2187.3,406.7 2188.6,404.9 2189.9,400.8 2191.2,397.9 2192.5,393.8 2193.8,391.1 2195.1,388.0 2196.4,386.0 2197.7,383.6 2199.0,380.8 2200.3,382.1 2201.6,386.0 2202.9,388.5 2204.2,388.2 2205.5,391.2 2206.8,394.1 2208.1,399.4 2209.4,402.8 2210.7,404.9 2212.0,409.4 2213.3,409.2 2214.6,407.7 2215.9,408.1 2217.6,400.1 2219.3,389.9 2220.8,392.1 2222.4,393.8 2224.2,413.3 2225.4,414.2 2226.6,414.1 2227.9,415.8 2229.1,416.9 2230.3,417.5 2231.5,417.9 2232.8,419.8 2234.0,419.8 2235.3,422.3 2236.5,423.9 2237.8,424.7 2239.0,424.9 2240.2,426.4 2241.5,425.4 2242.7,426.6 2244.0,429.0 2245.2,429.4 2246.7,423.0 2248.2,418.3 2249.6,414.6 2250.9,412.2 2252.2,407.2 2253.5,404.0 2254.8,401.4 2256.1,398.5 2257.6,399.7 2259.1,397.4 2260.6,399.0 2261.8,400.6 2263.0,399.3 2264.3,400.5 2265.5,400.7 2266.8,400.0 2268.0,403.0 2269.2,401.1 2270.5,403.4 2271.7,402.9 2273.0,406.6 2274.3,408.0 2275.6,412.1 2276.9,412.0 2278.2,414.8 2279.5,418.5 2280.7,419.6 2281.8,419.5 2283.0,422.9 2284.1,423.2 2285.3,425.1 2286.4,424.8 2287.6,425.1 2288.7,428.9 2289.9,428.9 2291.1,429.0 2292.2,430.5 2293.4,430.6 2294.6,433.0 2295.7,433.6 2296.9,433.7 2298.1,434.2 2299.2,436.1 2300.4,438.4 2301.6,438.5 2302.9,436.3 2304.2,435.5 2305.5,435.5 2306.8,434.1 2308.1,426.7 2309.4,419.4 2310.7,410.7 2312.0,403.3 2313.3,396.2 2314.6,386.3 2315.9,379.5 2317.2,378.1 2318.5,372.7 2319.8,370.2 2321.1,368.6 2322.4,371.1 2323.7,376.7 2325.0,379.5 2326.3,377.8 2327.5,377.3 2328.8,374.3 2330.1,379.0 2331.4,380.8 2332.7,383.7 2333.9,384.1 2335.1,384.8 2336.3,388.1 2337.5,388.9 2338.7,388.7 2339.9,391.3 2341.1,391.2 2342.4,392.6 2343.6,396.0 2344.8,397.7 2346.0,399.6 2347.2,400.7 2348.4,400.3 2349.6,402.9 2350.8,404.3 2351.9,405.6 2353.1,405.3 2354.2,405.4 2355.4,405.5 2356.5,405.4 2357.7,407.7 2358.9,409.4 2360.0,408.6 2361.3,407.2 2362.6,409.1 2363.9,409.0 2365.2,407.1 2366.5,408.4 2367.8,406.0 2369.1,406.8 2370.4,401.9 2371.7,398.3 2373.0,393.8 2374.3,392.4 2375.6,388.7 2376.9,384.8 2378.2,384.7 2379.5,380.8 2380.8,380.4 2382.1,380.4 2383.4,378.1 2384.7,378.2 2386.0,379.2 2387.3,380.0 2388.6,381.7 2389.9,384.0 2391.2,385.4 2392.5,387.6 2393.8,388.6 2395.1,391.5 2396.4,391.8 2397.7,395.5 2399.0,396.5 2400.3,397.4 2401.6,398.8 2402.9,401.6 2404.2,402.6 2405.5,401.4 2406.7,399.3 2408.0,400.3 2409.3,401.6 2410.6,401.5 2411.9,402.4 2413.2,404.2 2414.5,403.4 2415.8,405.0 2417.0,404.0 2418.2,404.5 2419.4,405.3 2420.6,402.6 2421.8,404.6 2423.0,404.0 2424.2,402.0 2425.4,403.2 2426.5,402.8 2427.7,402.8 2428.9,402.0 2430.1,401.6 2431.4,396.7 2432.7,393.0 2434.0,388.6 2435.3,386.1 2436.6,385.0 2437.9,383.1 2439.2,380.5 2440.5,379.2 2441.8,378.2 2443.1,378.8 2444.4,380.0 2445.7,381.5 2447.0,383.1 2448.3,383.4 2449.6,382.1 2450.9,382.3 2452.2,381.0 2453.5,380.8 2454.7,381.5 2455.9,382.8 2457.1,386.8 2458.3,388.2 2459.4,389.4 2460.6,388.9 2461.8,390.4 2463.0,391.8 2464.2,393.9 2465.4,395.8 2466.6,396.0 2467.8,399.0 2468.9,397.9 2470.1,397.8 2471.3,397.3 2472.4,394.4 2473.6,393.0 2474.8,394.4 2476.0,392.3 2477.1,391.2 2478.3,389.8 2479.5,389.9 2480.8,389.4 2482.1,389.6 2483.4,389.7 2484.7,389.9 2485.9,390.9 2487.2,392.0 2488.5,391.2 2489.8,389.8 2491.1,389.2 2492.4,388.6 2493.7,388.8 2495.0,387.7 2496.3,386.0 2497.6,384.9 2498.9,379.8 2500.2,378.2 2501.5,377.2 2502.8,373.7 2504.1,372.6 2505.4,370.4 2506.7,368.6 2508.0,365.9 2509.3,364.5 2510.6,395.1 2511.9,395.1 2513.2,396.2 2514.5,400.3 2515.8,400.3 2517.1,404.1 2518.4,405.4 2519.7,406.9 2521.0,411.7 2522.3,413.3 2523.6,415.9 2524.8,418.0 2525.9,420.6 2527.1,421.4 2528.2,423.7 2529.4,427.6 2530.5,429.6 2531.7,432.5 2532.8,433.0 2534.0,435.4 2535.3,437.8 2536.6,438.6 2537.9,438.5 2539.2,440.7 2540.5,440.6" fill="none" stroke="#4055A3" stroke-width="1.35" stroke-linejoin="round"/>
<path d="M646 538.2 V729.9" stroke="#CE561B" stroke-width="1.5"/>
<polyline points="645.6,656.0 648.7,658.6 651.5,654.2 654.0,658.6 659.6,639.5 664.0,635.7 667.3,639.0 672.4,638.2 675.7,631.3 680.0,623.7 682.6,624.7 687.6,611.5 691.0,617.8 693.5,631.8 695.8,654.7 698.3,660.3 700.6,560.5 703.4,560.5 706.0,630.6 708.8,638.2 711.3,649.7 716.9,657.3 719.5,652.2 721.5,653.5 724.1,632.6 726.6,636.9 729.1,626.2 731.7,626.2 734.7,630.6 739.8,623.7 743.7,611.5 747.5,583.5 752.6,573.8 755.1,601.3 757.7,657.3 760.2,708.2 762.7,699.3 765.8,704.4 768.4,652.2 770.9,611.5 773.7,619.1 776.2,615.8 778.8,624.2 781.3,621.1 784.4,638.2 788.2,642.0 792.0,645.8 794.6,645.8 797.1,631.8 799.7,625.5 802.2,605.1 804.8,600.0 807.3,588.6 809.8,582.2 812.4,607.6 814.9,590.6 817.5,621.6 820.0,644.6 825.1,649.7 828.4,657.3 830.7,656.0 833.3,660.3 835.8,657.3 838.4,658.6 840.9,664.2 843.7,656.0 846.8,640.7 850.6,629.3 855.7,625.5 859.5,618.6 862.0,617.8 864.6,622.9 867.1,612.7 870.2,601.3 872.2,587.3 874.8,612.7 877.3,600.8 879.9,610.2 882.4,639.5 884.9,648.4 888.0,653.5 891.3,649.7 893.1,650.2 895.6,658.6 898.4,663.1 902.8,650.9 905.8,636.4 909.1,633.1 911.7,628.0 914.7,620.4 918.0,616.6 921.1,618.6 924.4,623.7 929.5,619.1 932.0,610.2 934.6,600.0 937.1,615.3 939.7,614.0 943.5,629.3 947.3,642.0 950.4,644.6 952.4,639.5 955.0,655.3 957.5,654.7 960.6,663.7 962.6,659.8 965.7,664.9 968.2,652.2 971.0,642.0 973.5,641.5 976.6,635.7 980.4,625.5 983.7,616.6 986.8,615.8 991.1,601.3 993.9,598.7 996.5,586.0 999.5,598.7 1002.1,606.4 1004.6,617.8 1007.1,640.7 1012.2,658.6 1016.6,653.5 1019.9,659.3 1022.4,661.1 1025.5,654.0 1027.5,654.0 1030.1,645.8 1033.1,640.7 1035.2,642.0 1039.0,631.8 1042.8,622.9 1045.8,620.4 1048.4,620.4 1053.0,612.7 1056.8,596.2 1059.3,596.2 1061.9,603.3 1064.4,588.6 1067.0,611.5 1069.5,636.9 1072.1,651.7 1074.6,647.1 1077.2,650.9 1079.7,651.4 1082.3,657.3 1084.8,654.7 1087.3,652.2 1089.9,653.5 1092.4,650.9 1095.0,638.2 1097.5,636.9 1100.1,633.1 1102.6,635.7 1105.2,628.0 1108.5,619.1 1110.8,619.1 1113.3,614.8 1116.1,612.7 1119.2,606.4 1121.7,596.2 1124.3,589.8 1126.3,588.6 1129.3,606.4 1131.9,651.7 1133.9,654.7 1137.0,663.7 1139.5,661.1 1141.6,646.3 1144.6,648.4 1147.2,648.4 1149.7,650.9 1152.3,649.7 1157.4,643.3 1159.9,636.9 1162.4,633.9 1165.0,635.7 1167.5,632.3 1170.1,631.3 1173.4,625.5 1175.7,619.1 1178.2,615.3 1180.8,609.4 1183.3,592.4 1185.9,582.2 1188.7,575.8 1191.2,596.2 1193.8,626.7 1196.8,660.3 1199.4,664.9 1201.9,674.6 1204.5,662.4 1209.5,645.8 1212.1,653.5 1214.6,656.0 1217.2,657.3 1219.7,652.2 1223.0,639.5 1225.6,630.6 1228.1,624.2 1230.7,617.1 1233.2,615.3 1235.8,621.6 1238.3,616.6 1240.9,606.4 1243.4,604.3 1245.9,612.7 1248.5,610.2 1251.0,575.8 1253.6,606.4 1256.6,621.6 1258.9,634.4 1261.5,649.7 1264.0,644.1 1266.5,662.4 1269.6,670.5 1271.6,659.8 1274.2,667.5 1276.7,659.8 1279.8,648.4 1282.6,644.6 1285.6,636.9 1290.7,622.9 1295.3,607.6 1297.9,619.1 1300.4,622.2 1303.0,617.8 1305.5,605.1 1308.0,599.2 1310.6,612.0 1313.1,609.4 1315.7,611.5 1318.2,617.8 1321.3,634.4 1323.8,643.3 1326.4,640.7 1328.9,641.3 1331.5,658.6 1334.0,643.3 1336.6,656.0 1339.1,649.7 1341.6,652.2 1344.2,642.0 1346.7,640.7 1349.3,634.4 1352.3,641.5 1355.7,638.2 1360.0,630.6 1363.3,620.4 1365.8,611.5 1367.9,607.6 1370.4,595.7 1373.0,601.3 1375.5,589.8 1378.1,603.8 1383.1,635.7 1385.7,638.2 1388.7,659.8 1391.3,654.2 1393.8,658.6 1396.9,661.9 1399.4,662.4 1402.0,665.4 1404.5,657.3 1409.6,644.6 1414.7,628.0 1417.3,624.2 1419.8,626.7 1422.4,620.4 1425.7,608.9 1429.5,598.7 1432.8,591.1 1435.1,582.2 1437.6,620.4 1440.2,624.2 1442.7,644.6 1445.3,646.3 1447.8,639.5 1450.6,622.9 1453.2,657.3 1456.2,670.0 1461.3,649.7 1463.8,647.1 1466.4,635.7 1468.9,631.3 1471.5,629.3 1474.0,630.6 1476.6,605.1 1479.1,598.2 1482.2,611.5 1487.3,624.7 1489.8,622.2 1492.4,616.0 1494.9,615.8 1500.0,604.3 1502.5,620.4 1505.1,633.1 1507.9,654.7 1513.0,646.6 1515.5,647.1 1518.1,645.3 1520.6,656.0 1523.2,656.5 1526.2,657.3 1528.8,654.7 1531.3,648.4 1533.9,636.9 1536.9,633.1 1539.5,634.9 1542.0,631.8 1547.1,624.2 1549.6,617.8 1552.2,612.7 1554.7,606.4 1557.3,598.2 1559.8,586.5 1562.6,577.9 1565.2,598.7 1567.5,651.7 1570.0,659.8 1572.8,669.5 1575.4,669.5 1577.9,647.6 1580.4,653.5 1583.5,645.8 1586.0,649.1 1588.6,653.5 1593.7,638.2 1596.2,631.8 1598.8,625.5 1601.3,625.5 1603.9,629.3 1606.4,631.3 1609.0,628.0 1611.5,624.2 1614.1,621.1 1617.1,616.6 1619.7,603.8 1622.2,578.4 1624.7,560.0 1627.3,588.6 1629.8,648.4 1632.4,671.3 1634.9,675.1 1637.5,661.1 1640.0,653.5 1643.3,650.9 1645.9,652.2 1648.4,654.2 1651.0,651.7 1656.1,638.2 1661.2,624.7 1663.7,623.7 1666.2,620.4 1668.8,622.2 1671.3,618.6 1673.9,624.7 1676.4,625.5 1679.0,623.7 1681.5,619.1 1684.6,610.2 1687.1,608.9 1689.7,602.6 1692.2,631.8 1694.8,641.5 1697.3,642.5 1700.6,645.8 1703.2,649.7 1705.7,654.7 1708.2,653.5 1710.8,654.2 1713.3,649.1 1715.9,655.3 1721.0,645.8 1726.1,636.4 1728.6,632.3 1733.7,620.4 1738.8,606.4 1743.9,587.3 1746.4,586.0 1749.0,580.9 1751.5,597.5 1754.1,625.5 1756.6,639.5 1759.2,642.0 1761.7,650.9 1764.3,657.3 1766.8,660.3 1770.1,665.4 1772.7,662.4 1775.2,661.1 1777.7,654.7 1780.3,644.6 1785.4,626.7 1787.9,617.8 1790.5,611.0 1793.5,608.9 1796.1,647.6 1798.6,644.6 1801.2,633.1 1803.7,616.6 1806.3,598.7 1809.1,577.9 1811.6,603.8 1814.2,624.2 1816.7,630.6 1819.2,636.9 1822.3,649.7 1824.8,644.6 1827.4,649.7 1829.9,648.4 1832.5,657.3 1835.0,654.2 1837.6,655.3 1840.1,652.7 1843.2,648.4 1845.7,640.0 1848.3,637.7 1850.8,636.4 1853.4,634.4 1855.9,630.6 1858.5,628.8 1861.0,620.4 1863.5,611.5 1866.1,600.0 1868.6,587.3 1871.2,567.7 1873.7,572.8 1876.3,617.8 1878.8,634.4 1881.4,647.6 1883.9,647.6 1886.5,647.1 1889.0,657.3 1892.1,668.7 1895.4,664.9 1903.0,661.9 1905.6,644.3 1909.5,640.4 1913.4,635.2 1916.0,618.8 1918.6,617.0 1923.2,620.9 1926.4,611.8 1930.2,591.0 1933.6,575.4 1936.7,597.5 1939.3,613.1 1941.9,640.4 1945.8,650.7 1949.7,658.5 1952.3,648.9 1954.9,648.9 1958.8,654.6 1962.7,650.7 1965.3,653.3 1967.9,652.6 1970.5,637.0 1975.7,636.5 1978.3,639.1 1980.9,645.6 1983.5,626.1 1987.4,614.4 1991.3,606.6 1996.5,601.4 1999.1,601.4 2001.7,614.4 2004.3,617.0 2008.9,628.7 2012.0,648.2 2014.6,649.4 2017.2,659.3 2019.8,648.2 2022.4,633.9 2024.5,644.3 2027.1,645.6 2030.2,642.2 2032.8,644.3 2035.4,637.8 2038.0,636.5 2043.2,628.2 2045.8,628.2 2052.3,617.0 2058.8,604.0 2061.4,605.3 2064.0,617.0 2069.2,628.2 2071.8,639.1 2074.4,630.8 2077.0,644.3 2079.6,653.3 2082.2,654.6 2084.8,660.6 2087.4,646.9 2092.5,639.1 2097.7,628.2 2100.3,627.4 2102.9,633.3 2105.5,633.9 2108.1,631.8 2113.3,619.6 2115.9,614.4 2118.5,602.2 2121.1,585.8 2123.7,614.4 2126.3,628.7 2128.9,635.7 2131.5,634.4 2134.1,643.7 2136.7,635.9 2139.3,637.8 2141.9,647.4 2144.5,648.2 2147.1,656.7 2149.7,642.2 2151.8,650.0 2154.3,648.2 2157.5,632.6 2161.4,628.2 2165.3,624.0 2167.8,624.8 2170.4,630.0 2173.0,631.8 2175.6,630.0 2179.5,614.4 2183.4,602.2 2186.0,615.7 2188.6,609.2 2191.2,630.0 2193.8,641.7 2196.4,647.4 2199.0,642.2 2201.6,641.7 2204.2,646.9 2206.8,644.3 2209.4,649.4 2212.0,661.9 2214.6,659.8 2216.7,654.6 2219.3,606.6 2221.9,604.0 2224.5,628.7 2227.1,631.8 2231.5,632.6 2235.4,622.2 2238.0,618.3 2245.8,593.6 2248.3,613.1 2252.2,628.7 2256.7,646.9 2260.6,650.0 2271.7,654.6 2279.5,639.1 2287.3,627.4 2292.0,619.6 2297.2,615.2 2299.8,624.0 2302.9,607.9 2307.6,580.6 2310.7,597.5 2313.3,628.7 2318.5,652.0 2328.8,657.2 2333.5,664.5 2336.6,661.1 2341.8,649.4 2347.0,639.1 2350.9,624.0 2354.8,619.6 2359.5,621.4 2365.2,604.0 2369.9,585.8 2373.0,605.3 2378.2,633.9 2382.9,655.9 2385.5,648.2 2388.6,644.8 2391.2,646.3 2393.8,646.3 2395.8,659.3 2401.0,655.9 2403.6,633.9 2408.8,634.6 2411.9,627.4 2414.5,628.2 2417.1,633.3 2419.7,624.8 2423.6,620.9 2426.2,614.4 2429.6,598.8 2432.2,585.3 2435.3,602.7 2437.4,598.0 2440.0,620.9 2443.1,644.3 2445.7,655.9 2448.3,650.0 2450.9,652.0 2453.5,659.3 2456.1,658.5 2458.7,654.6 2462.6,652.6 2466.0,642.2 2471.7,641.1 2474.3,641.7 2478.9,626.1 2482.1,625.6 2485.9,618.3 2489.8,612.6 2492.4,594.9 2494.5,585.8 2497.1,610.5 2499.7,614.4 2502.8,633.9 2504.9,636.5 2507.5,670.2 2510.1,669.7 2512.7,615.2 2515.3,644.3 2518.4,649.4 2520.5,646.3 2523.1,650.0 2525.7,643.0 2528.8,643.7 2531.4,644.3 2535.3,620.9 2538.7,601.4 2541.8,614.4" fill="none" stroke="#CE561B" stroke-width="1.35" stroke-linejoin="round"/>
<path d="M646 741.9 V934" stroke="#068C45" stroke-width="1.5"/>
<polyline points="645.6,816.5 648.2,833.0 651.5,845.7 654.0,847.5 656.6,846.3 659.1,850.8 661.7,857.2 664.7,848.3 667.3,855.2 671.1,861.0 674.9,868.7 678.7,858.5 682.6,847.5 685.1,845.7 687.6,838.1 690.2,839.9 692.7,835.6 695.8,803.7 698.3,847.0 700.9,873.0 702.9,858.5 706.0,801.2 708.8,807.6 711.3,815.2 714.4,817.7 716.4,818.5 719.0,829.2 721.5,849.1 724.1,854.7 726.6,858.5 729.1,849.6 731.7,843.7 734.7,852.6 737.3,851.6 739.8,851.6 742.4,854.7 744.9,867.4 747.5,870.7 750.0,873.7 752.6,859.7 755.1,819.0 757.7,782.1 760.7,777.8 763.3,796.1 765.8,841.4 768.4,838.9 770.9,807.0 774.2,833.0 778.0,858.5 781.1,861.0 783.6,864.8 786.2,862.3 788.7,856.7 791.3,845.7 793.8,845.0 796.9,855.9 798.9,854.1 802.2,861.5 804.8,864.3 807.3,866.6 809.8,869.4 812.4,863.1 814.9,881.4 817.5,841.9 820.0,810.1 823.1,806.3 825.6,797.9 828.2,797.4 830.7,802.5 833.3,826.1 835.8,824.1 838.4,817.0 840.9,833.0 843.7,861.0 846.3,869.2 848.8,859.7 851.3,848.3 853.9,847.5 856.4,846.3 859.0,849.1 862.0,852.6 864.6,851.6 867.1,861.0 869.2,862.3 871.7,871.7 874.8,856.7 876.8,863.6 879.3,836.8 881.9,813.9 884.9,807.6 887.5,820.8 890.0,813.9 893.1,810.1 895.6,819.0 898.2,828.7 900.7,817.7 903.3,825.4 905.8,838.1 908.4,856.7 910.9,858.5 913.5,840.7 916.0,834.3 918.6,831.2 921.1,839.4 923.6,855.2 926.2,859.7 928.7,864.3 931.3,873.2 934.1,877.6 937.1,863.1 939.7,873.0 942.2,848.3 944.8,825.4 947.3,808.8 949.9,792.3 952.4,778.3 955.0,805.0 957.5,819.0 960.1,836.8 962.6,836.3 965.1,840.7 967.7,863.6 970.2,872.5 973.3,880.9 975.8,868.7 978.4,860.5 981.2,852.9 983.7,855.2 986.8,847.0 989.3,853.4 991.9,860.3 994.4,859.7 996.5,874.5 999.0,850.8 1001.5,854.1 1004.1,816.5 1006.6,803.7 1009.7,812.6 1012.2,807.0 1014.8,817.7 1017.3,842.7 1019.9,842.4 1022.4,811.4 1025.0,831.7 1027.5,836.8 1030.1,855.9 1032.6,854.1 1035.7,855.9 1038.2,851.6 1040.8,841.9 1043.3,848.3 1045.8,851.6 1048.4,838.1 1050.9,843.2 1053.5,847.0 1056.0,855.9 1058.6,859.7 1061.1,861.0 1064.4,864.8 1067.0,831.7 1069.5,810.1 1072.1,791.0 1074.6,810.9 1077.2,812.6 1079.7,852.6 1082.3,834.3 1084.8,812.1 1087.3,831.7 1089.9,841.9 1092.4,849.6 1095.0,847.0 1097.5,849.6 1100.6,846.3 1103.1,852.9 1105.7,855.9 1108.2,848.8 1110.8,855.2 1113.3,853.4 1116.6,847.5 1119.2,860.5 1121.7,867.4 1124.3,873.7 1126.3,882.7 1128.8,839.4 1131.4,808.8 1133.9,799.9 1137.0,795.3 1139.5,808.8 1142.1,821.6 1144.6,826.6 1147.2,831.0 1149.7,827.9 1152.3,837.3 1154.8,830.5 1157.4,844.5 1159.9,865.6 1162.4,869.2 1165.0,863.1 1167.5,859.2 1170.1,851.6 1172.6,860.3 1175.7,847.0 1178.2,863.6 1180.8,871.2 1183.3,882.1 1185.9,892.8 1188.9,895.9 1191.2,826.6 1193.8,783.4 1196.3,769.4 1199.4,764.3 1201.9,796.1 1204.5,822.3 1207.0,827.2 1209.5,839.4 1212.1,842.7 1214.6,838.9 1217.2,846.3 1219.7,862.3 1222.5,881.9 1225.1,857.2 1227.6,839.4 1230.2,844.0 1232.7,847.0 1235.8,848.8 1238.3,854.7 1240.9,861.0 1243.9,860.3 1246.5,854.1 1250.8,834.8 1255.9,847.0 1258.7,827.9 1258.9,827.9 1261.5,834.3 1266.5,816.5 1269.1,834.3 1274.7,814.4 1277.2,834.3 1279.8,858.5 1282.3,854.1 1284.9,851.3 1290.0,841.9 1292.5,846.3 1295.1,846.3 1297.6,837.6 1300.2,839.4 1302.7,853.9 1305.5,853.4 1308.0,866.1 1310.6,869.4 1313.1,867.4 1315.7,844.5 1318.2,820.3 1321.0,794.8 1323.6,803.7 1326.1,825.4 1328.7,830.5 1331.2,820.3 1333.8,830.5 1336.8,817.7 1339.4,835.6 1341.9,850.1 1344.5,848.8 1347.0,846.3 1349.5,849.6 1352.1,859.0 1354.6,861.0 1357.2,857.2 1359.7,856.7 1362.8,854.7 1365.3,855.2 1367.9,859.2 1370.4,863.1 1373.0,858.0 1375.5,861.8 1378.1,852.9 1380.6,835.6 1383.1,816.5 1385.7,812.6 1388.7,804.5 1391.3,818.5 1393.8,813.9 1396.4,835.6 1398.9,839.4 1401.5,847.0 1404.0,844.5 1406.6,836.8 1409.1,836.3 1411.7,829.7 1414.7,825.4 1417.3,838.1 1419.8,858.0 1422.4,863.6 1424.9,861.0 1427.4,861.0 1430.0,863.6 1432.5,867.4 1435.1,869.4 1437.6,838.1 1440.2,839.4 1442.7,820.3 1445.8,815.2 1448.3,843.2 1450.9,835.6 1453.4,810.1 1456.0,812.6 1458.5,822.8 1461.0,837.6 1463.6,827.9 1466.4,829.7 1468.9,840.7 1471.5,852.1 1474.0,851.3 1476.6,825.4 1479.4,810.1 1481.9,822.8 1484.5,835.6 1487.0,847.0 1489.6,859.7 1492.1,869.9 1494.7,882.7 1497.2,892.8 1500.3,884.7 1502.8,854.7 1505.3,834.3 1507.9,818.5 1510.4,822.8 1513.5,831.2 1516.0,827.9 1518.6,817.7 1521.1,814.7 1523.7,826.6 1526.2,829.2 1528.8,836.8 1531.3,847.0 1533.9,841.9 1536.4,845.2 1539.0,852.6 1542.0,855.2 1544.6,855.4 1547.1,858.0 1549.6,865.3 1552.2,868.7 1554.7,873.7 1557.3,887.7 1559.8,897.9 1562.6,896.7 1565.2,847.0 1567.7,791.0 1570.3,779.6 1572.8,766.8 1575.4,774.5 1577.9,824.1 1580.4,831.7 1583.5,839.4 1586.0,833.8 1588.6,849.6 1591.1,846.3 1593.7,847.5 1596.2,840.1 1598.8,833.8 1601.3,844.5 1603.9,845.2 1606.4,843.2 1609.0,846.3 1611.5,854.7 1614.6,865.6 1617.1,870.7 1619.7,882.1 1622.2,891.6 1624.7,890.8 1627.3,844.5 1629.8,806.3 1632.4,790.2 1634.9,788.5 1637.5,827.4 1640.3,822.3 1642.8,833.5 1645.4,833.0 1647.9,836.8 1650.5,838.9 1653.0,843.2 1655.5,844.5 1658.1,839.9 1661.2,838.1 1663.7,837.6 1666.2,838.1 1668.8,845.7 1671.3,850.8 1673.9,852.1 1676.4,856.7 1682.0,866.1 1684.6,872.5 1687.1,871.2 1689.7,867.9 1692.2,813.4 1694.8,814.4 1697.3,827.2 1699.8,813.9 1702.9,797.4 1705.4,805.0 1708.0,811.4 1710.5,827.9 1713.1,824.1 1715.6,853.4 1718.4,868.7 1723.5,858.5 1726.1,845.0 1728.6,849.6 1731.2,846.3 1733.7,846.3 1736.3,853.4 1738.8,856.7 1741.3,857.7 1743.9,864.3 1746.4,865.6 1749.0,867.4 1752.0,853.9 1754.6,846.3 1757.1,839.4 1759.7,835.1 1762.2,821.6 1764.8,806.3 1767.3,821.6 1770.1,808.8 1772.7,815.2 1775.7,825.4 1777.7,850.3 1780.3,855.9 1783.4,866.1 1785.9,866.6 1788.4,883.9 1791.0,901.8 1793.5,912.4 1796.1,797.4 1798.6,803.7 1801.7,818.5 1804.2,826.6 1806.8,834.3 1809.3,841.9 1811.9,826.1 1814.4,834.3 1817.0,825.4 1819.5,823.3 1822.0,829.2 1824.6,818.2 1827.1,814.7 1830.2,805.8 1832.7,838.9 1835.3,838.9 1837.8,841.9 1840.4,841.4 1842.9,866.6 1848.0,856.4 1850.8,853.4 1855.9,846.3 1858.5,845.0 1861.0,840.1 1866.1,849.6 1868.6,855.2 1871.2,862.8 1873.7,863.1 1876.3,834.3 1878.8,810.1 1881.4,797.4 1884.4,790.5 1887.0,794.8 1889.5,827.9 1890.5,824.6 1892.6,844.1 1897.8,858.3 1903.0,870.5 1905.6,845.4 1907.7,854.4 1910.3,845.4 1912.9,837.1 1915.4,849.3 1918.0,850.6 1920.6,856.5 1923.2,862.8 1925.8,853.2 1928.4,842.8 1931.0,848.0 1933.6,848.5 1936.7,828.5 1939.3,819.4 1941.9,817.6 1944.5,813.7 1947.1,831.1 1949.7,846.1 1952.3,838.9 1954.9,835.8 1957.5,824.1 1959.6,835.8 1962.2,833.7 1964.8,855.7 1967.4,873.9 1970.0,859.6 1972.6,861.7 1975.2,872.6 1977.8,884.3 1980.4,876.5 1983.0,841.5 1985.6,829.3 1988.2,827.2 1990.8,832.4 1993.3,838.9 1995.9,840.2 1998.5,835.0 2003.7,825.1 2006.3,825.9 2008.9,818.1 2011.5,803.8 2014.1,831.6 2017.2,825.4 2019.3,835.0 2022.4,828.5 2025.0,846.1 2027.6,846.1 2030.2,840.2 2032.3,848.0 2034.9,834.2 2037.5,835.0 2040.1,840.2 2045.3,854.4 2048.4,859.6 2053.6,870.0 2058.3,878.6 2060.9,862.2 2063.5,838.9 2066.1,815.5 2068.7,796.0 2071.3,786.9 2073.8,796.0 2076.4,844.8 2079.0,835.0 2081.6,840.2 2084.2,855.7 2086.8,837.1 2089.4,837.1 2094.6,834.5 2099.8,828.0 2102.4,844.1 2105.0,864.1 2107.6,863.0 2110.2,868.7 2113.3,873.1 2115.9,872.1 2118.5,872.6 2121.1,859.1 2123.7,844.1 2126.3,840.9 2128.9,824.6 2131.5,816.8 2134.1,811.6 2136.7,812.4 2141.4,790.8 2144.0,850.6 2146.6,829.8 2149.2,817.6 2151.8,837.6 2154.3,862.2 2159.5,851.9 2162.1,850.0 2164.7,840.9 2167.3,840.2 2169.9,857.0 2172.5,862.2 2175.1,864.1 2177.7,864.1 2182.9,874.4 2185.5,859.6 2188.1,854.4 2190.7,827.2 2193.3,815.5 2195.9,805.1 2198.5,797.3 2201.1,796.0 2203.7,834.5 2206.3,825.9 2208.9,831.6 2211.5,863.0 2214.1,855.0 2216.7,859.6 2219.3,801.2 2221.9,798.1 2224.5,853.9 2227.1,853.2 2229.7,855.0 2232.2,851.3 2234.8,856.5 2240.0,870.0 2245.2,881.7 2250.4,842.8 2253.5,825.9 2257.4,812.9 2260.6,820.7 2271.7,829.8 2274.3,825.9 2279.0,845.4 2282.1,855.7 2284.7,855.7 2289.4,848.0 2292.0,851.9 2297.2,864.8 2299.8,882.5 2302.4,881.7 2305.0,886.4 2307.6,899.1 2310.2,864.8 2312.7,828.5 2315.3,779.7 2317.9,803.8 2321.1,763.0 2323.1,803.8 2328.3,801.2 2330.9,825.9 2333.5,848.0 2336.1,849.3 2338.7,861.7 2341.3,861.7 2343.9,857.0 2346.5,832.4 2349.1,833.2 2351.7,845.4 2356.9,855.7 2359.5,857.0 2362.1,856.5 2364.7,862.2 2367.3,863.0 2369.9,867.4 2372.5,845.4 2375.1,827.2 2377.7,812.9 2382.9,812.4 2385.5,812.9 2388.1,835.0 2393.2,846.7 2395.8,830.6 2398.4,840.2 2401.0,853.9 2403.6,839.4 2406.2,853.2 2411.4,845.4 2416.6,851.3 2419.2,849.3 2421.8,855.2 2424.4,855.2 2427.0,857.0 2429.6,853.9 2432.2,853.2 2434.8,832.4 2437.4,833.2 2440.0,810.3 2442.6,816.8 2445.2,833.2 2447.8,832.4 2450.4,828.5 2453.0,835.0 2455.6,832.4 2458.2,840.2 2460.8,833.7 2463.4,849.3 2466.0,857.0 2468.6,860.9 2471.1,855.7 2473.7,854.4 2476.3,844.1 2478.9,838.9 2481.5,838.3 2486.7,848.0 2489.3,848.7 2491.9,847.2 2494.5,847.2 2497.1,831.1 2499.7,829.8 2502.3,807.7 2504.9,803.8 2507.5,783.0 2510.1,779.1 2512.7,847.4 2515.3,848.0 2517.9,847.2 2520.5,842.8 2523.1,853.2 2525.7,842.8 2528.3,850.6 2530.9,850.6 2533.5,867.4 2536.1,856.5 2538.7,852.4 2541.8,855.0" fill="none" stroke="#068C45" stroke-width="1.35" stroke-linejoin="round"/>
<path d="M2260.9 129.8 V934" stroke="#c3d1e3" stroke-width="1.5"/>
<rect x="2265.6" y="253.6" width="84.9" height="23" rx="2.6" fill="#00A2DD"/><circle cx="2260.6" cy="270.7" r="4.4" fill="#00A2DD"/>
<rect x="2265.6" y="379" width="83.4" height="23" rx="2.6" fill="#4055A3"/><circle cx="2260.6" cy="397.2" r="4.4" fill="#4055A3"/>
<rect x="2265.6" y="632.6" width="84.4" height="23.9" rx="2.6" fill="#CE561B"/><circle cx="2260.6" cy="650" r="4.4" fill="#CE561B"/>
<rect x="2265.6" y="803.6" width="83.4" height="23.4" rx="2.6" fill="#068C45"/><circle cx="2260.6" cy="821.2" r="4.4" fill="#068C45"/>
<rect x="2169" y="922" width="181" height="22" rx="2" fill="#e9f3f1" stroke="#c4d9d5" stroke-width="1"/>
</svg>
<span class="a t" style="left:615.50px;top:142.30px;font:normal normal 13.33px/16px 'DejaVu Sans',sans-serif;color:#00A2DD;letter-spacing:-0.430px;">100</span>
<span class="a t" style="left:623.30px;top:227.70px;font:normal normal 13.33px/16px 'DejaVu Sans',sans-serif;color:#00A2DD;letter-spacing:-0.180px;">50</span>
<span class="a t" style="left:623.80px;top:355.20px;font:normal normal 13.33px/16px 'DejaVu Sans',sans-serif;color:#4055A3;letter-spacing:-0.680px;">80</span>
<span class="a t" style="left:622.80px;top:403.40px;font:normal normal 13.33px/16px 'DejaVu Sans',sans-serif;color:#4055A3;letter-spacing:0.320px;">70</span>
<span class="a t" style="left:623.80px;top:451.30px;font:normal normal 13.33px/16px 'DejaVu Sans',sans-serif;color:#4055A3;letter-spacing:-0.680px;">60</span>
<span class="a t" style="left:622.80px;top:499.80px;font:normal normal 13.33px/16px 'DejaVu Sans',sans-serif;color:#4055A3;letter-spacing:0.320px;">50</span>
<span class="a t" style="left:624.00px;top:566.90px;font:normal normal 13.33px/16px 'DejaVu Sans',sans-serif;color:#CE561B;letter-spacing:-0.880px;">20</span>
<span class="a t" style="left:632.40px;top:624.20px;font:normal normal 13.33px/16px 'DejaVu Sans',sans-serif;color:#CE561B;">0</span>
<span class="a t" style="left:615.60px;top:681.20px;font:normal normal 13.33px/16px 'DejaVu Sans',sans-serif;color:#CE561B;letter-spacing:1.355px;">-20</span>
<span class="a t" style="left:631.60px;top:766.60px;font:normal normal 13.33px/16px 'DejaVu Sans',sans-serif;color:#068C45;">5</span>
<span class="a t" style="left:632.40px;top:834.30px;font:normal normal 13.33px/16px 'DejaVu Sans',sans-serif;color:#068C45;">0</span>
<span class="a t" style="left:624.80px;top:902.50px;font:normal normal 13.33px/16px 'DejaVu Sans',sans-serif;color:#068C45;letter-spacing:1.991px;">-5</span>
<span class="a t" style="left:2451.50px;top:131.80px;font:normal normal 14.67px/18px 'DejaVu Sans',sans-serif;color:#00A2DD;letter-spacing:0.159px;">Flow (L/s)</span>
<span class="a t" style="left:2425.00px;top:336.80px;font:normal normal 14.67px/18px 'DejaVu Sans',sans-serif;color:#4055A3;letter-spacing:-0.113px;">Pressure (psi)</span>
<span class="a t" style="left:2419.70px;top:541.80px;font:normal normal 14.67px/18px 'DejaVu Sans',sans-serif;color:#CE561B;letter-spacing:0.165px;">Flow_hpf (L/s)</span>
<span class="a t" style="left:2416.00px;top:746.20px;font:normal normal 14.67px/18px 'DejaVu Sans',sans-serif;color:#068C45;letter-spacing:0.033px;">Press_hpf (psi)</span>
<span class="a t" style="left:2267.50px;top:256.20px;font:normal normal 14.67px/18px 'DejaVu Sans',sans-serif;color:#fff;letter-spacing:0.439px;">29.068 L/s</span>
<span class="a t" style="left:2267.50px;top:381.80px;font:normal normal 14.67px/18px 'DejaVu Sans',sans-serif;color:#fff;letter-spacing:0.291px;">72.798 psi</span>
<span class="a t" style="left:2268.50px;top:635.30px;font:normal normal 14.67px/18px 'DejaVu Sans',sans-serif;color:#fff;letter-spacing:0.721px;">-6.665 L/s</span>
<span class="a t" style="left:2269.00px;top:806.40px;font:normal normal 14.67px/18px 'DejaVu Sans',sans-serif;color:#fff;letter-spacing:0.124px;">1.4675 psi</span>
<span class="a t" style="left:2171.50px;top:923.80px;font:normal normal 14.67px/18px 'DejaVu Sans',sans-serif;color:#3b8677;letter-spacing:0.269px;">11/27/2018 6:46:14 PM</span>
<span class="a t" style="left:630.95px;top:944.50px;font:normal normal 14.67px/18px 'Liberation Sans',sans-serif;color:#666;letter-spacing:0.391px;">Nov 2</span>
<span class="a t" style="left:755.55px;top:944.50px;font:normal normal 14.67px/18px 'Liberation Sans',sans-serif;color:#666;letter-spacing:0.391px;">Nov 4</span>
<span class="a t" style="left:882.85px;top:944.50px;font:normal normal 14.67px/18px 'Liberation Sans',sans-serif;color:#666;letter-spacing:0.391px;">Nov 6</span>
<span class="a t" style="left:1007.35px;top:944.50px;font:normal normal 14.67px/18px 'Liberation Sans',sans-serif;color:#666;letter-spacing:0.391px;">Nov 8</span>
<span class="a t" style="left:1127.80px;top:944.50px;font:normal normal 14.67px/18px 'Liberation Sans',sans-serif;color:#666;letter-spacing:0.343px;">Nov 10</span>
<span class="a t" style="left:1252.30px;top:944.50px;font:normal normal 14.67px/18px 'Liberation Sans',sans-serif;color:#666;letter-spacing:0.343px;">Nov 12</span>
<span class="a t" style="left:1376.90px;top:944.50px;font:normal normal 14.67px/18px 'Liberation Sans',sans-serif;color:#666;letter-spacing:0.343px;">Nov 14</span>
<span class="a t" style="left:1501.40px;top:944.50px;font:normal normal 14.67px/18px 'Liberation Sans',sans-serif;color:#666;letter-spacing:0.343px;">Nov 16</span>
<span class="a t" style="left:1625.90px;top:944.50px;font:normal normal 14.67px/18px 'Liberation Sans',sans-serif;color:#666;letter-spacing:0.343px;">Nov 18</span>
<span class="a t" style="left:1750.50px;top:944.50px;font:normal normal 14.67px/18px 'Liberation Sans',sans-serif;color:#666;letter-spacing:0.343px;">Nov 20</span>
<span class="a t" style="left:1875.00px;top:944.50px;font:normal normal 14.67px/18px 'Liberation Sans',sans-serif;color:#666;letter-spacing:0.343px;">Nov 22</span>
<span class="a t" style="left:1999.60px;top:944.50px;font:normal normal 14.67px/18px 'Liberation Sans',sans-serif;color:#666;letter-spacing:0.343px;">Nov 24</span>
<span class="a t" style="left:2124.10px;top:944.50px;font:normal normal 14.67px/18px 'Liberation Sans',sans-serif;color:#666;letter-spacing:0.343px;">Nov 26</span>
<span class="a t" style="left:2248.60px;top:944.50px;font:normal normal 14.67px/18px 'Liberation Sans',sans-serif;color:#666;letter-spacing:0.343px;">Nov 28</span>
<span class="a t" style="left:2373.20px;top:944.50px;font:normal normal 14.67px/18px 'Liberation Sans',sans-serif;color:#666;letter-spacing:0.343px;">Nov 30</span>
<span class="a t" style="left:2501.85px;top:944.50px;font:normal normal 14.67px/18px 'Liberation Sans',sans-serif;color:#666;letter-spacing:0.391px;">Dec 2</span>
</section>
<section class="a" style="left:0;top:0">
<div class="a " style="left:613.9px;top:993.3px;width:1939.1px;height:81.2px;background:#f5f5f5;"></div>
<div class="a " style="left:613.9px;top:1074.5px;width:1939.1px;height:32.9px;background:#007960;"></div>
<div class="a " style="left:613.9px;top:1107.4px;width:1939.1px;height:158.6px;background:#fff;"></div>
<span class="a t" style="left:646.00px;top:969.30px;font:normal normal 14.8px/18px 'Liberation Sans',sans-serif;color:#007960;letter-spacing:-0.668px;">11/1/2018 10:06 PM</span>
<span class="a t" style="left:769.60px;top:969.30px;font:normal normal 14.8px/18px 'Liberation Sans',sans-serif;color:#007960;letter-spacing:-1.600px;text-decoration:underline;text-underline-offset:2px;">EDT</span>
<span class="a t" style="left:1496.50px;top:968.90px;font:normal normal 14.8px/18px 'Liberation Sans',sans-serif;color:#007960;letter-spacing:-0.123px;">1 month</span>
<span class="a t" style="left:2401.00px;top:969.30px;font:normal normal 14.8px/18px 'Liberation Sans',sans-serif;color:#007960;letter-spacing:-0.701px;">12/2/2018 7:06 AM</span>
<span class="a t" style="left:2517.30px;top:969.30px;font:normal normal 14.8px/18px 'Liberation Sans',sans-serif;color:#007960;letter-spacing:-1.600px;text-decoration:underline;text-underline-offset:2px;">EST</span>
<svg class="a" style="left:0;top:0" width="2553" height="1266" viewBox="0 0 2553 1266">
<path d="M630.5 968.5 V982.5" stroke="#007960" stroke-width="3"/><path d="M623.9 978.9 L625.9 976.9 L630.5 981.5 L635.1 976.9 L637.1 978.9 L630.5 985.5 Z" fill="#007960" stroke="#007960" stroke-width="0.6"/>
<path d="M630.5 1068 V1054" stroke="#007960" stroke-width="3"/><path d="M623.9 1057.6 L625.9 1059.6 L630.5 1055 L635.1 1059.6 L637.1 1057.6 L630.5 1051 Z" fill="#007960" stroke="#007960" stroke-width="0.6"/>
<path d="M1442.6 969.2 L1433 977.9000000000001 L1442.6 986.6 Z" fill="#007960"/><path d="M1451.8 969.2 L1442.2 977.9000000000001 L1451.8 986.6 Z" fill="#007960"/><path d="M1480 969.2 L1470 977.9000000000001 L1480 986.6 Z" fill="#007960"/><path d="M1567 969.2 L1577 977.9000000000001 L1567 986.6 Z" fill="#007960"/><path d="M1595 969.2 L1604.6 977.9000000000001 L1595 986.6 Z" fill="#007960"/><path d="M1604.2 969.2 L1613.8 977.9000000000001 L1604.2 986.6 Z" fill="#007960"/><path d="M1631 969.2 L1640.6 977.9000000000001 L1631 986.6 Z" fill="#007960"/><rect x="1640.2" y="969.2" width="3" height="17.4" fill="#007960"/>
<g stroke="#007960" stroke-width="2.2" fill="none"><path d="M1674.6 975.6 A5.4 5.4 0 0 0 1664.6 975.4"/><path d="M1664.4 979.6 A5.4 5.4 0 0 0 1674.4 979.8"/></g><path d="M1676.6 971.4 V976.6 H1671.4 Z M1662.4 983.8 V978.6 H1667.6 Z" fill="#007960"/>
<rect x="646.3" y="1005.6" width="1865.4" height="14.6" rx="2" fill="#f3f3f3" stroke="#d2d2d2" stroke-width="2"/>
<rect x="1450" y="1005.4" width="2775" height="0" />
<rect x="1449.8" y="1005.4" width="775.4" height="14.9" fill="#fff" stroke="#007960" stroke-width="2.4"/>
<rect x="1447.5" y="1001.4" width="4.6" height="23.2" fill="#fff" stroke="#007960" stroke-width="2"/><path d="M1449.8 1004 V1022" stroke="#cfe3de" stroke-width="1.2"/>
<rect x="2222.8999999999996" y="1001.4" width="4.6" height="23.2" fill="#fff" stroke="#007960" stroke-width="2"/><path d="M2225.2 1004 V1022" stroke="#cfe3de" stroke-width="1.2"/>
<path d="M793.1 1021.2 v4 M971 1021.2 v4 M1148.9 1021.2 v4 M1326.8 1021.2 v4 M1504.7 1021.2 v4 M1682.6 1021.2 v4 M1860.5 1021.2 v4 M2038.4 1021.2 v4 M2216.3 1021.2 v4 M2394.2 1021.2 v4" stroke="#cfcfcf" stroke-width="1.2"/>
<rect x="2524" y="1004.7" width="6.8" height="17.8" fill="#007960"/><rect x="2532" y="1004.7" width="7" height="17.8" fill="#007960"/><path d="M2524.2 1015 L2525.6 1008.6 L2527.4 1019.4 L2529 1009 L2530.6 1015 M2532.2 1015 L2533.7 1008.6 L2535.5 1019.4 L2537.2 1009 L2538.8 1015" stroke="#fff" stroke-width="1.1" fill="none"/>
<path d="M626.8 1084 V1097" stroke="#fff" stroke-width="1.3"/><path d="M626 1096.9 H645" stroke="#cfe6e0" stroke-width="1.6"/><path d="M628.6 1094.6 L628.6 1091 L632.8 1085.6 L637.4 1090.8 L640.8 1088 L643.2 1094.6 Z" fill="#fff"/>
</svg>
<span class="a t" style="left:778.85px;top:1026.90px;font:normal normal 11.2px/13px 'Liberation Sans',sans-serif;color:#9a9a9a;letter-spacing:0.497px;">Oct 7</span>
<span class="a t" style="left:952.75px;top:1026.90px;font:normal normal 11.2px/13px 'Liberation Sans',sans-serif;color:#9a9a9a;letter-spacing:0.753px;">Oct 14</span>
<span class="a t" style="left:1130.65px;top:1026.90px;font:normal normal 11.2px/13px 'Liberation Sans',sans-serif;color:#9a9a9a;letter-spacing:0.753px;">Oct 21</span>
<span class="a t" style="left:1308.55px;top:1026.90px;font:normal normal 11.2px/13px 'Liberation Sans',sans-serif;color:#9a9a9a;letter-spacing:0.753px;">Oct 28</span>
<span class="a t" style="left:1489.45px;top:1026.90px;font:normal normal 11.2px/13px 'Liberation Sans',sans-serif;color:#9a9a9a;letter-spacing:0.374px;">Nov 4</span>
<span class="a t" style="left:1664.35px;top:1026.90px;font:normal normal 11.2px/13px 'Liberation Sans',sans-serif;color:#9a9a9a;letter-spacing:0.421px;">Nov 11</span>
<span class="a t" style="left:1842.25px;top:1026.90px;font:normal normal 11.2px/13px 'Liberation Sans',sans-serif;color:#9a9a9a;letter-spacing:0.255px;">Nov 18</span>
<span class="a t" style="left:2020.15px;top:1026.90px;font:normal normal 11.2px/13px 'Liberation Sans',sans-serif;color:#9a9a9a;letter-spacing:0.255px;">Nov 25</span>
<span class="a t" style="left:2201.55px;top:1026.90px;font:normal normal 11.2px/13px 'Liberation Sans',sans-serif;color:#9a9a9a;letter-spacing:0.124px;">Dec 2</span>
<span class="a t" style="left:2379.45px;top:1026.90px;font:normal normal 11.2px/13px 'Liberation Sans',sans-serif;color:#9a9a9a;letter-spacing:0.124px;">Dec 9</span>
<span class="a t" style="left:645.90px;top:1052.90px;font:normal normal 14.8px/18px 'Liberation Sans',sans-serif;color:#007960;letter-spacing:-0.337px;">10/1/2018</span>
<span class="a t" style="left:1557.00px;top:1052.90px;font:normal normal 14.8px/18px 'Liberation Sans',sans-serif;color:#007960;letter-spacing:-0.312px;">2.4 months</span>
<span class="a t" style="left:2467.70px;top:1052.90px;font:normal normal 14.8px/18px 'Liberation Sans',sans-serif;color:#007960;letter-spacing:-0.470px;">12/13/2018</span>
<span class="a t" style="left:648.00px;top:1082.00px;font:normal normal 16px/19px 'Liberation Sans',sans-serif;color:#fff;letter-spacing:-0.484px;">Details</span>
<span class="a t" style="left:2303.60px;top:1082.10px;font:normal normal 16px/19px 'Liberation Sans',sans-serif;color:#fff;letter-spacing:-0.904px;">Nov 27, 2018 6:46 PM</span>
<div class="a " style="left:2458.2px;top:1078px;width:99.8px;height:26px;background:#fff;border-radius:4px;"></div>
<span class="a t" style="left:2485.50px;top:1082.50px;font:normal normal 14px/17px 'Liberation Sans',sans-serif;color:#333;letter-spacing:-0.856px;">Customize</span>
<div class="a " style="left:613.9px;top:1139.4px;width:1939.1px;height:2px;background:#dddddd;"></div>
<div class="a " style="left:613.9px;top:1141.4px;width:1939.1px;height:26.8px;background:#f9f9f9;"></div>
<div class="a " style="left:613.9px;top:1168.2px;width:1939.1px;height:1.3px;background:#dddddd;"></div>
<div class="a " style="left:613.9px;top:1196px;width:1939.1px;height:1.3px;background:#dddddd;"></div>
<div class="a " style="left:613.9px;top:1197.2px;width:1939.1px;height:26.8px;background:#f9f9f9;"></div>
<div class="a " style="left:613.9px;top:1224px;width:1939.1px;height:1.3px;background:#dddddd;"></div>
<span class="a t" style="left:815.00px;top:1116.90px;font:normal normal 16px/19px 'Liberation Sans',sans-serif;color:#333;letter-spacing:-0.427px;-webkit-text-stroke:0.45px #333;">Name</span>
<span class="a t" style="left:2333.50px;top:1116.60px;font:normal normal 16px/19px 'Liberation Sans',sans-serif;color:#222;letter-spacing:-0.903px;">Assets</span>
<span class="a t" style="left:2392.60px;top:1116.60px;font:normal normal 16px/19px 'Liberation Sans',sans-serif;color:#007960;letter-spacing:-0.265px;">Lane</span>
<span class="a t" style="left:787.60px;top:1145.70px;font:normal normal 16px/19px 'Liberation Sans',sans-serif;color:#444;letter-spacing:-0.722px;">L/s</span>
<span class="a t" style="left:815.00px;top:1145.70px;font:normal normal 16px/19px 'Liberation Sans',sans-serif;color:#222;letter-spacing:-0.242px;-webkit-text-stroke:0.45px #222;">Flow</span>
<span class="a t" style="left:2332.80px;top:1145.50px;font:normal normal 16px/19px 'Liberation Sans',sans-serif;color:#2b8a76;letter-spacing:-0.608px;text-decoration:underline;text-underline-offset:2.5px;text-decoration-thickness:1.3px;">Pump 1</span>
<span class="a t" style="left:2435.30px;top:1145.70px;font:normal normal 16px/19px 'Liberation Sans',sans-serif;color:#333;">1</span>
<span class="a t" style="left:2510.50px;top:1145.70px;font:normal normal 16px/19px 'Liberation Sans',sans-serif;color:#00A2DD;letter-spacing:-0.548px;">29.068</span>
<span class="a t" style="left:787.60px;top:1173.60px;font:normal normal 16px/19px 'Liberation Sans',sans-serif;color:#444;letter-spacing:-0.499px;">psi</span>
<span class="a t" style="left:815.00px;top:1173.60px;font:normal normal 16px/19px 'Liberation Sans',sans-serif;color:#222;letter-spacing:-0.446px;-webkit-text-stroke:0.45px #222;">Pressure</span>
<span class="a t" style="left:2332.80px;top:1173.40px;font:normal normal 16px/19px 'Liberation Sans',sans-serif;color:#2b8a76;letter-spacing:-0.608px;text-decoration:underline;text-underline-offset:2.5px;text-decoration-thickness:1.3px;">Pump 1</span>
<span class="a t" style="left:2436.30px;top:1173.60px;font:normal normal 16px/19px 'Liberation Sans',sans-serif;color:#333;">2</span>
<span class="a t" style="left:2510.50px;top:1173.60px;font:normal normal 16px/19px 'Liberation Sans',sans-serif;color:#4055A3;letter-spacing:-0.548px;">72.798</span>
<span class="a t" style="left:787.60px;top:1201.60px;font:normal normal 16px/19px 'Liberation Sans',sans-serif;color:#444;letter-spacing:-0.722px;">L/s</span>
<span class="a t" style="left:815.00px;top:1201.60px;font:normal normal 16px/19px 'Liberation Sans',sans-serif;color:#222;-webkit-text-stroke:0.45px #222;">Flow_hpf</span>
<span class="a t" style="left:2332.80px;top:1201.40px;font:normal normal 16px/19px 'Liberation Sans',sans-serif;color:#2b8a76;letter-spacing:-0.608px;text-decoration:underline;text-underline-offset:2.5px;text-decoration-thickness:1.3px;">Pump 1</span>
<span class="a t" style="left:2436.30px;top:1201.60px;font:normal normal 16px/19px 'Liberation Sans',sans-serif;color:#333;">3</span>
<span class="a t" style="left:2513.40px;top:1201.60px;font:normal normal 16px/19px 'Liberation Sans',sans-serif;color:#CE561B;letter-spacing:-0.414px;">-6.665</span>
<span class="a t" style="left:787.60px;top:1229.70px;font:normal normal 16px/19px 'Liberation Sans',sans-serif;color:#444;letter-spacing:-0.499px;">psi</span>
<span class="a t" style="left:815.00px;top:1229.70px;font:normal normal 16px/19px 'Liberation Sans',sans-serif;color:#222;letter-spacing:-0.387px;-webkit-text-stroke:0.45px #222;">Press_hpf</span>
<span class="a t" style="left:2332.80px;top:1229.50px;font:normal normal 16px/19px 'Liberation Sans',sans-serif;color:#2b8a76;letter-spacing:-0.608px;text-decoration:underline;text-underline-offset:2.5px;text-decoration-thickness:1.3px;">Pump 1</span>
<span class="a t" style="left:2436.30px;top:1229.70px;font:normal normal 16px/19px 'Liberation Sans',sans-serif;color:#333;">4</span>
<span class="a t" style="left:2509.80px;top:1229.70px;font:normal normal 16px/19px 'Liberation Sans',sans-serif;color:#068C45;letter-spacing:-0.348px;">1.4675</span>
</section>
<svg class="a" style="left:0;top:0" width="2553" height="1266" viewBox="0 0 2553 1266">
<path d="M708.9 1122.7 l8.4 8.4 M717.3 1122.7 l-8.4 8.4" stroke="#666" stroke-width="3.3"/><rect x="732.5" y="1119.2" width="12.4" height="12.4" rx="2.6" fill="#fff" stroke="#6a6a6a" stroke-width="1.5"/><path d="M794 1125.2 L798.8 1119.8 L803.6 1125.2 Z M794 1127.2 L798.8 1132.6 L803.6 1127.2 Z" fill="#777"/><path d="M866 1125.2 L870.8 1119.8 L875.6 1125.2 Z M866 1127.2 L870.8 1132.6 L875.6 1127.2 Z" fill="#777"/>
<path d="M2437 1125.6 L2441.8 1120.2 L2446.6 1125.6 Z" fill="#007960"/>
<g stroke="#333" stroke-width="1.1" fill="none"><rect x="2530.3" y="1114" width="12.6" height="12"/><path d="M2530.3 1118 H2543 M2530.3 1122 H2543 M2534.5 1114 V1126 M2538.7 1114 V1126"/></g><circle cx="2542.6" cy="1123.4" r="5.6" fill="#222" stroke="#fff" stroke-width="1"/><path d="M2539.4 1123.4 H2545.8 M2542.6 1120.2 V1126.6" stroke="#fff" stroke-width="1.7"/>
<g fill="none" stroke="#333"><circle cx="2472" cy="1090.4" r="3.6" stroke-width="2.6"/><circle cx="2472" cy="1090.4" r="5.6" stroke-width="2.2" stroke-dasharray="2.2 2.2"/><circle cx="2479.6" cy="1086" r="1.6" stroke-width="1.4"/><circle cx="2479.6" cy="1086" r="2.9" stroke-width="1.3" stroke-dasharray="1.2 1.1"/><circle cx="2479.6" cy="1094.6" r="1.6" stroke-width="1.4"/><circle cx="2479.6" cy="1094.6" r="2.9" stroke-width="1.3" stroke-dasharray="1.2 1.1"/></g>
<g transform="translate(659.8 1155.1) rotate(45)" fill="#007960"><path d="M0 -10.2 C3 -7.4 3.8 -3 3.4 1.6 L3.4 4.4 L-3.4 4.4 L-3.4 1.6 C-3.8 -3 -3 -7.4 0 -10.2 Z"/><path d="M-3.4 0.2 L-7.2 5.6 L-3.4 5.2 Z M3.4 0.2 L7.2 5.6 L3.4 5.2 Z"/><path d="M-1.8 5 L0 9.2 L1.8 5 Z"/><circle cx="0" cy="-4.2" r="1.3" fill="#fff"/></g>
<circle cx="689.5" cy="1154.8" r="6.95" fill="#007960"/><path d="M688.2 1150.1 h2.7 v2.5 h-2.7 Z M687.3 1153.8 h3.6 v4.6 h1.1 v1.5 h-5 v-1.5 h1.2 v-3.1 h-0.9 Z" fill="#fff"/>
<path d="M708.8 1150.9 l8.4 8.4 M717.1999999999999 1150.9 l-8.4 8.4" stroke="#007960" stroke-width="3.3"/><rect x="732.5" y="1147.6" width="12.4" height="12.4" rx="2.6" fill="#fff" stroke="#6a6a6a" stroke-width="1.5"/>
<path d="M761.9 1156.1 L764.9 1145.3 L770.2 1158.8999999999999 L771.7 1151.3 L775.5 1161.1999999999998 L779.3 1154.3999999999999" stroke="#00A2DD" stroke-width="2.15" fill="none" stroke-linejoin="round" stroke-linecap="round"/>
<g transform="translate(659.8 1182.9) rotate(45)" fill="#007960"><path d="M0 -10.2 C3 -7.4 3.8 -3 3.4 1.6 L3.4 4.4 L-3.4 4.4 L-3.4 1.6 C-3.8 -3 -3 -7.4 0 -10.2 Z"/><path d="M-3.4 0.2 L-7.2 5.6 L-3.4 5.2 Z M3.4 0.2 L7.2 5.6 L3.4 5.2 Z"/><path d="M-1.8 5 L0 9.2 L1.8 5 Z"/><circle cx="0" cy="-4.2" r="1.3" fill="#fff"/></g>
<circle cx="689.5" cy="1182.6000000000001" r="6.95" fill="#007960"/><path d="M688.2 1177.9 h2.7 v2.5 h-2.7 Z M687.3 1181.6000000000001 h3.6 v4.6 h1.1 v1.5 h-5 v-1.5 h1.2 v-3.1 h-0.9 Z" fill="#fff"/>
<path d="M708.8 1178.7000000000003 l8.4 8.4 M717.1999999999999 1178.7000000000003 l-8.4 8.4" stroke="#007960" stroke-width="3.3"/><rect x="732.5" y="1175.4" width="12.4" height="12.4" rx="2.6" fill="#fff" stroke="#6a6a6a" stroke-width="1.5"/>
<path d="M761.9 1183.9 L764.9 1173.1000000000001 L770.2 1186.7 L771.7 1179.1000000000001 L775.5 1189.0 L779.3 1182.2" stroke="#4055A3" stroke-width="2.15" fill="none" stroke-linejoin="round" stroke-linecap="round"/>
<g transform="translate(659.8 1210.9) rotate(45)" fill="#007960"><path d="M0 -10.2 C3 -7.4 3.8 -3 3.4 1.6 L3.4 4.4 L-3.4 4.4 L-3.4 1.6 C-3.8 -3 -3 -7.4 0 -10.2 Z"/><path d="M-3.4 0.2 L-7.2 5.6 L-3.4 5.2 Z M3.4 0.2 L7.2 5.6 L3.4 5.2 Z"/><path d="M-1.8 5 L0 9.2 L1.8 5 Z"/><circle cx="0" cy="-4.2" r="1.3" fill="#fff"/></g>
<circle cx="689.5" cy="1210.6000000000001" r="6.95" fill="#007960"/><path d="M688.2 1205.9 h2.7 v2.5 h-2.7 Z M687.3 1209.6000000000001 h3.6 v4.6 h1.1 v1.5 h-5 v-1.5 h1.2 v-3.1 h-0.9 Z" fill="#fff"/>
<path d="M708.8 1206.7000000000003 l8.4 8.4 M717.1999999999999 1206.7000000000003 l-8.4 8.4" stroke="#007960" stroke-width="3.3"/><rect x="732.5" y="1203.4" width="12.4" height="12.4" rx="2.6" fill="#fff" stroke="#6a6a6a" stroke-width="1.5"/>
<path d="M761.9 1211.9 L764.9 1201.1000000000001 L770.2 1214.7 L771.7 1207.1000000000001 L775.5 1217.0 L779.3 1210.2" stroke="#CE561B" stroke-width="2.15" fill="none" stroke-linejoin="round" stroke-linecap="round"/>
<path d="M631.6 1205.7 H622.2 Q620 1205.7 620 1207.9 V1215.3000000000002 Q620 1217.5 622.2 1217.5 H630 Q632.2 1217.5 632.2 1215.3000000000002 V1211.9" stroke="#007960" stroke-width="1.4" fill="none"/><path d="M625.2 1214.1000000000001 L626 1210.7 L633.2 1203.5 L635.8 1206.1000000000001 L628.6 1213.3000000000002 Z" fill="#007960" stroke="#fff" stroke-width="0.5"/>
<g transform="translate(659.8 1239) rotate(45)" fill="#007960"><path d="M0 -10.2 C3 -7.4 3.8 -3 3.4 1.6 L3.4 4.4 L-3.4 4.4 L-3.4 1.6 C-3.8 -3 -3 -7.4 0 -10.2 Z"/><path d="M-3.4 0.2 L-7.2 5.6 L-3.4 5.2 Z M3.4 0.2 L7.2 5.6 L3.4 5.2 Z"/><path d="M-1.8 5 L0 9.2 L1.8 5 Z"/><circle cx="0" cy="-4.2" r="1.3" fill="#fff"/></g>
<circle cx="689.5" cy="1238.7" r="6.95" fill="#007960"/><path d="M688.2 1234 h2.7 v2.5 h-2.7 Z M687.3 1237.7 h3.6 v4.6 h1.1 v1.5 h-5 v-1.5 h1.2 v-3.1 h-0.9 Z" fill="#fff"/>
<path d="M708.8 1234.8000000000002 l8.4 8.4 M717.1999999999999 1234.8000000000002 l-8.4 8.4" stroke="#007960" stroke-width="3.3"/><rect x="732.5" y="1231.5" width="12.4" height="12.4" rx="2.6" fill="#fff" stroke="#6a6a6a" stroke-width="1.5"/>
<path d="M761.9 1240 L764.9 1229.2 L770.2 1242.8 L771.7 1235.2 L775.5 1245.1 L779.3 1238.3" stroke="#068C45" stroke-width="2.15" fill="none" stroke-linejoin="round" stroke-linecap="round"/>
<path d="M631.6 1233.8 H622.2 Q620 1233.8 620 1236 V1243.4 Q620 1245.6 622.2 1245.6 H630 Q632.2 1245.6 632.2 1243.4 V1240" stroke="#007960" stroke-width="1.4" fill="none"/><path d="M625.2 1242.2 L626 1238.8 L633.2 1231.6 L635.8 1234.2 L628.6 1241.4 Z" fill="#007960" stroke="#fff" stroke-width="0.5"/>
</svg>
</body></html>
